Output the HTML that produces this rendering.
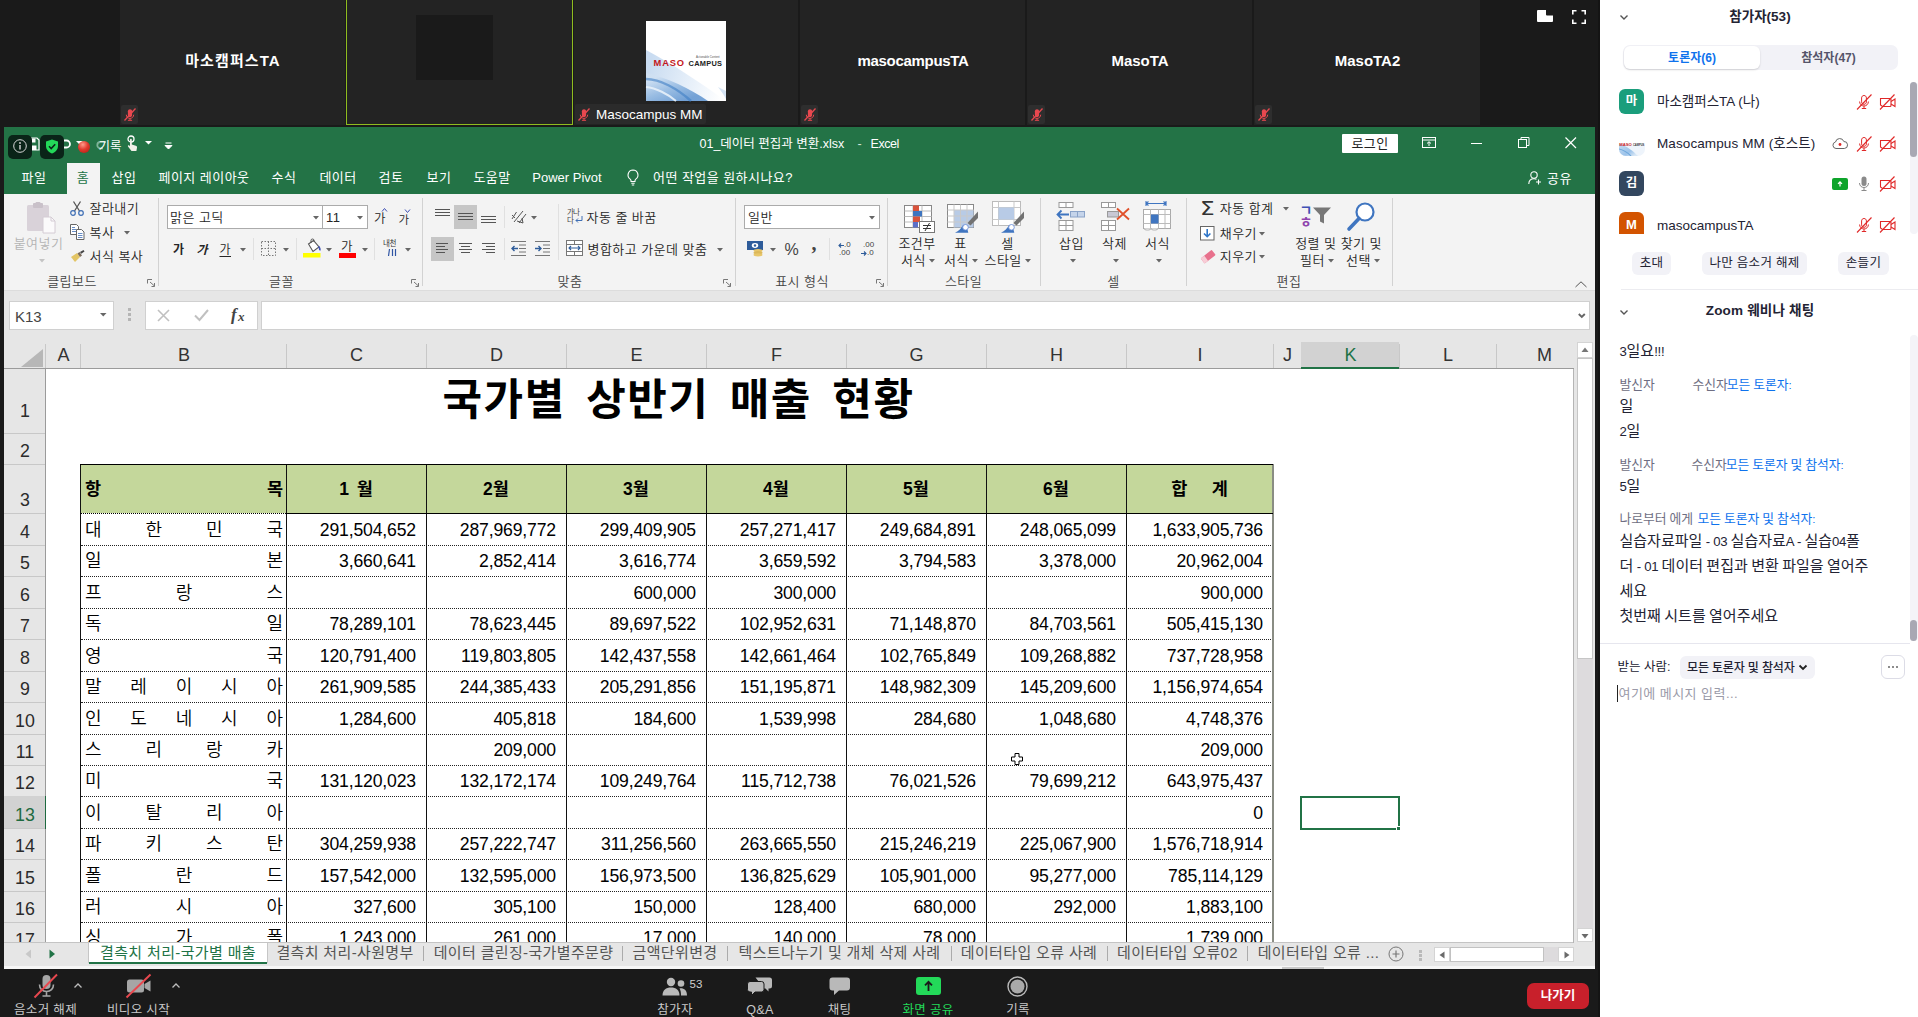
<!DOCTYPE html>
<html lang="ko"><head><meta charset="utf-8"><title>Zoom - Excel</title>
<style>
*{box-sizing:border-box;margin:0;padding:0}
html,body{width:1918px;height:1017px;overflow:hidden;background:#1a1a1a}
body{position:relative;font-family:"Liberation Sans","Noto Sans CJK KR",sans-serif;font-size:12px;color:#262626}
.a{position:absolute}
.t{position:absolute;white-space:nowrap;line-height:1}
.c{text-align:center}
.tile{position:absolute;top:0;height:125px;background:#232323}
.tname{position:absolute;left:0;right:0;top:52px;text-align:center;color:#fff;font-weight:bold;font-size:15px;line-height:18px;white-space:nowrap}
.mutebox{position:absolute;left:1px;top:105px;width:18px;height:19px;background:#2e2e2e;border-radius:2px}
svg{position:absolute;overflow:visible}
#xl{position:absolute;left:4px;top:127px;width:1592px;height:842px;background:#e6e6e6;overflow:hidden}
.rt{position:absolute;white-space:nowrap;line-height:1;font-size:13px;color:#262626}
.rl{position:absolute;white-space:nowrap;line-height:1;font-size:13px;color:#444;text-align:center}
.sep{position:absolute;top:74px;width:1px;height:86px;background:#d4d4d4}
.ch{position:absolute;top:215px;height:27px;line-height:27px;text-align:center;font-size:18px;color:#333;border-right:1px solid #c9c9c9}
.rh{position:absolute;left:0;width:42px;text-align:center;font-size:19px;color:#333;border-bottom:1px solid #c9c9c9;line-height:1}
.rh span{position:absolute;left:0;right:0;bottom:3px}
.cell{position:absolute;font-size:17.5px;line-height:1;white-space:nowrap;color:#000}
.num{text-align:right}
.nm{display:flex;justify-content:space-between}
.hd{font-weight:bold;font-size:17px}
.tab{position:absolute;top:818px;font-size:15.5px;color:#555;white-space:nowrap;line-height:1}
</style></head>
<body>
<div class="a" style="left:120px;top:0px;width:225px;height:125px;background:#232323"></div>
<div class="t" style="left:233.0px;top:52px;font-size:15px;color:#fff;transform:translateX(-50%);font-weight:bold;line-height:18px;letter-spacing:1.1px">마소캠퍼스TA</div>
<div class="a" style="left:121px;top:105px;width:17px;height:19px;background:#2e2e2e;border-radius:2px"></div>
<svg style="left:123.5px;top:107.5px;" width="12" height="13" viewBox="0 0 12 13"><path d="M6 1.2c1.2 0 2.1.9 2.1 2.1v3.6c0 1.2-.9 2.1-2.1 2.1S3.9 8.100 3.900 6.900V3.300c0-1.200.9-2.100 2.100-2.100z" fill="#e8484f"/><path d="M2.300 6.700c0 2 1.600 3.700 3.700 3.700s3.700-1.700 3.700-3.700M6 10.400v1.800M3.900 12.300h4.200" stroke="#e8484f" stroke-width="1" fill="none"/><path d="M0.500 12.500L11.500 0.500" stroke="#e8484f" stroke-width="1.300"/></svg>
<div class="a" style="left:347px;top:0px;width:225px;height:125px;background:#232323"></div>
<div class="a" style="left:574px;top:0px;width:224px;height:125px;background:#232323"></div>
<div class="a" style="left:800px;top:0px;width:225px;height:125px;background:#232323"></div>
<div class="t" style="left:913.0px;top:52px;font-size:15px;color:#fff;transform:translateX(-50%);font-weight:bold;line-height:18px;letter-spacing:-0.3px">masocampusTA</div>
<div class="a" style="left:801px;top:105px;width:17px;height:19px;background:#2e2e2e;border-radius:2px"></div>
<svg style="left:803.5px;top:107.5px;" width="12" height="13" viewBox="0 0 12 13"><path d="M6 1.2c1.2 0 2.1.9 2.1 2.1v3.6c0 1.2-.9 2.1-2.1 2.1S3.9 8.100 3.900 6.900V3.300c0-1.200.9-2.100 2.100-2.100z" fill="#e8484f"/><path d="M2.300 6.700c0 2 1.600 3.700 3.700 3.700s3.700-1.700 3.700-3.700M6 10.400v1.800M3.900 12.300h4.200" stroke="#e8484f" stroke-width="1" fill="none"/><path d="M0.500 12.500L11.500 0.500" stroke="#e8484f" stroke-width="1.300"/></svg>
<div class="a" style="left:1027px;top:0px;width:225px;height:125px;background:#232323"></div>
<div class="t" style="left:1140.0px;top:52px;font-size:15px;color:#fff;transform:translateX(-50%);font-weight:bold;line-height:18px;letter-spacing:0">MasoTA</div>
<div class="a" style="left:1028px;top:105px;width:17px;height:19px;background:#2e2e2e;border-radius:2px"></div>
<svg style="left:1030.5px;top:107.5px;" width="12" height="13" viewBox="0 0 12 13"><path d="M6 1.2c1.2 0 2.1.9 2.1 2.1v3.6c0 1.2-.9 2.1-2.1 2.1S3.9 8.100 3.900 6.900V3.300c0-1.200.9-2.100 2.100-2.100z" fill="#e8484f"/><path d="M2.300 6.700c0 2 1.600 3.700 3.700 3.700s3.700-1.700 3.700-3.700M6 10.400v1.800M3.900 12.300h4.200" stroke="#e8484f" stroke-width="1" fill="none"/><path d="M0.500 12.500L11.500 0.500" stroke="#e8484f" stroke-width="1.300"/></svg>
<div class="a" style="left:1254px;top:0px;width:226px;height:125px;background:#232323"></div>
<div class="t" style="left:1367.5px;top:52px;font-size:15px;color:#fff;transform:translateX(-50%);font-weight:bold;line-height:18px;letter-spacing:0">MasoTA2</div>
<div class="a" style="left:1255px;top:105px;width:17px;height:19px;background:#2e2e2e;border-radius:2px"></div>
<svg style="left:1257.5px;top:107.5px;" width="12" height="13" viewBox="0 0 12 13"><path d="M6 1.2c1.2 0 2.1.9 2.1 2.1v3.6c0 1.2-.9 2.1-2.1 2.1S3.9 8.100 3.900 6.900V3.300c0-1.200.9-2.100 2.100-2.100z" fill="#e8484f"/><path d="M2.300 6.700c0 2 1.600 3.700 3.700 3.700s3.700-1.700 3.700-3.700M6 10.400v1.800M3.900 12.300h4.200" stroke="#e8484f" stroke-width="1" fill="none"/><path d="M0.500 12.500L11.500 0.500" stroke="#e8484f" stroke-width="1.300"/></svg>
<div class="a" style="left:346px;top:-2px;width:227px;height:127px;border:1px solid #8fbc1f"></div>
<div class="a" style="left:416px;top:15px;width:77px;height:65px;background:#1a1a1a"></div>
<svg style="left:646px;top:21px;" width="80" height="80" viewBox="0 0 80 80"><defs><linearGradient id="lg1" x1="0" y1="0.300" x2="0.600" y2="1"><stop offset="0" stop-color="#cfe0f2"/><stop offset="0.500" stop-color="#8fb6e0"/><stop offset="1" stop-color="#5e93cf"/></linearGradient><linearGradient id="lg2" x1="0" y1="0.500" x2="1" y2="0.700"><stop offset="0" stop-color="#c9dcf1"/><stop offset="0.600" stop-color="#e9f1fa"/><stop offset="1" stop-color="#ffffff"/></linearGradient></defs><rect x="0" y="0" width="80" height="80" fill="#fff"/><path d="M0 29 C25 42 55 62 80 80 L0 80Z" fill="url(#lg2)"/><path d="M0 52 C20 56 45 68 62 80 L0 80Z" fill="url(#lg1)" opacity="0.850"/><path d="M0 58 C14 58 32 68 45 80" stroke="#3f7fc4" stroke-width="2.500" fill="none" opacity="0.600"/><path d="M0 66 C10 67 22 73 30 80" stroke="#e8f1fa" stroke-width="2" fill="none" opacity="0.900"/><path d="M72 66 C75 70 78 74 80 78 L80 70Z" fill="#c5d9ef" opacity="0.700"/></svg>
<div class="t" style="left:653.5px;top:58px;font-size:9.3px;color:#c4161c;font-weight:bold;letter-spacing:0.9px;line-height:10px">MASO</div>
<div class="t" style="left:688.5px;top:59.5px;font-size:7.4px;color:#222;font-weight:bold;letter-spacing:0.3px;line-height:8px">CAMPUS</div>
<div class="t" style="left:696px;top:55.5px;font-size:2.8px;color:#555;line-height:3px">Actionable Content</div>
<div class="a" style="left:575px;top:104px;width:131px;height:20px;background:#2b2b2b;border-radius:2px"></div>
<div class="t" style="left:596px;top:106.5px;font-size:13.5px;color:#fff;line-height:15px">Masocampus MM</div>
<svg style="left:578px;top:107.5px;" width="12" height="13" viewBox="0 0 12 13"><path d="M6 1.2c1.2 0 2.1.9 2.1 2.1v3.6c0 1.2-.9 2.1-2.1 2.1S3.9 8.100 3.900 6.900V3.300c0-1.200.9-2.100 2.100-2.100z" fill="#e8484f"/><path d="M2.300 6.700c0 2 1.600 3.700 3.700 3.700s3.700-1.700 3.700-3.700M6 10.400v1.800M3.900 12.300h4.200" stroke="#e8484f" stroke-width="1" fill="none"/><path d="M0.500 12.500L11.500 0.500" stroke="#e8484f" stroke-width="1.300"/></svg>
<svg style="left:1537px;top:10px;" width="16" height="12" viewBox="0 0 16 12"><path d="M1 0h14a1 1 0 0 1 1 1v10a1 1 0 0 1-1 1H1a1 1 0 0 1-1-1V1a1 1 0 0 1 1-1z" fill="#fff"/><path d="M9 0h7v5.500h-6a1 1 0 0 1-1-1z" fill="#1a1a1a"/></svg>
<svg style="left:1572px;top:10px;" width="14" height="14" viewBox="0 0 14 14"><path d="M0.800 4.500V0.800H4.500M9.500 0.800H13.200V4.500M13.200 9.500V13.200H9.500M4.500 13.200H0.800V9.500" stroke="#fff" stroke-width="1.600" fill="none"/></svg>
<div class="a" style="left:4px;top:127px;width:1591px;height:842px;background:#e6e6e6"></div>
<div class="a" style="left:4px;top:127px;width:1591px;height:67px;background:#237346"></div>
<svg style="left:26px;top:137px;" width="14" height="14" viewBox="0 0 14 14"><path d="M1 1h10l2 2v10H1z" fill="none" stroke="#fff" stroke-width="1.200"/><rect x="3.500" y="1.500" width="6" height="4" fill="#fff"/><rect x="3.500" y="8.500" width="7" height="4.500" fill="#fff"/></svg>
<svg style="left:58px;top:137px;" width="14" height="12" viewBox="0 0 14 12"><path d="M3 3.500h5.500a3.500 3.500 0 0 1 0 7H6" stroke="#fff" stroke-width="1.800" fill="none"/></svg>
<svg style="left:76px;top:141px;" width="10" height="6" viewBox="0 0 10 6"><path d="M0 0h7L3.500 3.500z" fill="#fff"/></svg>
<svg style="left:94px;top:139px;" width="16" height="10" viewBox="0 0 16 10"><path d="M12 3H6.500a3.200 3.200 0 0 0 0 6.400H9" stroke="#7fb398" stroke-width="1.800" fill="none"/></svg>
<div class="a" style="left:78px;top:141px;width:12px;height:12px;border-radius:50%;background:radial-gradient(circle at 40% 30%,#ff9a8a 0,#e23a2e 45%,#a81810 100%)"></div>
<div class="t" style="left:98.5px;top:140px;font-size:12.5px;color:#fff;line-height:15px">기록</div>
<svg style="left:126px;top:135px;" width="14" height="18" viewBox="0 0 14 18"><circle cx="5" cy="4" r="3" fill="none" stroke="#fff" stroke-width="1.300"/><path d="M4 4.500c0-1 1.800-1 1.800 0v5l4 1.200c1 .3 1.400 1 1.200 2l-.6 3.300H5.500L2 11.500c-.5-.8.500-1.700 1.300-1l.7.700z" fill="#f2efe9"/></svg>
<svg style="left:145px;top:141px;" width="8" height="5" viewBox="0 0 8 5"><path d="M0 0h7L3.500 3.500z" fill="#fff"/></svg>
<svg style="left:165px;top:143px;" width="8" height="7" viewBox="0 0 8 7"><path d="M0.500 0h6M0 2.500h7L3.500 6z" stroke="#fff" stroke-width="1" fill="#fff"/></svg>
<div class="a" style="left:8px;top:135px;width:24px;height:24px;background:#0a2418;border-radius:5px"></div>
<svg style="left:13px;top:139px;" width="14" height="14" viewBox="0 0 14 14"><circle cx="7" cy="7" r="6.300" fill="none" stroke="#d8d8d8" stroke-width="1"/><circle cx="7" cy="4" r="0.900" fill="#d8d8d8"/><path d="M7 6v4.500" stroke="#d8d8d8" stroke-width="1.400"/></svg>
<div class="a" style="left:40px;top:135px;width:24px;height:24px;background:#0a2418;border-radius:5px"></div>
<svg style="left:45px;top:139px;" width="14" height="15" viewBox="0 0 14 15"><path d="M7 0.500L13 2.500V7c0 3.500-2.500 6-6 7.500C3.500 13 1 10.500 1 7V2.500z" fill="#23d959"/><path d="M4 7.300l2.200 2.200L10.200 5.300" stroke="#0a2418" stroke-width="1.600" fill="none"/></svg>
<div class="t" style="left:699.5px;top:135.5px;font-size:12.5px;color:#fff;line-height:16px">01_데이터 편집과 변환.xlsx</div>
<div class="t" style="left:857.5px;top:135.5px;font-size:12.5px;color:#cfe3d7;line-height:16px">-</div>
<div class="t" style="left:870.5px;top:135.5px;font-size:12.5px;color:#fff;line-height:16px;letter-spacing:-0.45px">Excel</div>
<div class="a" style="left:1342px;top:134px;width:56px;height:19px;background:#fff;border-radius:1px"></div>
<div class="t" style="left:1370px;top:136px;font-size:13px;color:#222;transform:translateX(-50%);line-height:15px;letter-spacing:0.4px">로그인</div>
<svg style="left:1422px;top:137px;" width="14" height="11" viewBox="0 0 14 11"><rect x="0.500" y="0.500" width="13" height="10" fill="none" stroke="#fff" stroke-width="1"/><path d="M0.500 3h13" stroke="#fff" stroke-width="1"/><path d="M7 9V5M5 6.500L7 4.700L9 6.500" stroke="#fff" stroke-width="1" fill="none"/></svg>
<div class="a" style="left:1471px;top:143px;width:11px;height:1px;background:#fff"></div>
<svg style="left:1518px;top:137px;" width="12" height="11" viewBox="0 0 12 11"><rect x="0.500" y="2.500" width="8" height="8" fill="none" stroke="#fff" stroke-width="1"/><path d="M3 2.500V0.500h8v8h-2" fill="none" stroke="#fff" stroke-width="1"/></svg>
<svg style="left:1565px;top:137px;" width="12" height="12" viewBox="0 0 12 12"><path d="M0.500 0.500L11 11M11 0.500L0.500 11" stroke="#fff" stroke-width="1.200"/></svg>
<div class="a" style="left:67px;top:163px;width:33px;height:31px;background:#f3f3f3"></div>
<div class="t" style="left:34px;top:170px;font-size:13px;color:#fff;transform:translateX(-50%);line-height:16px;letter-spacing:0.45px">파일</div>
<div class="t" style="left:83px;top:170px;font-size:13px;color:#217346;transform:translateX(-50%);line-height:16px;letter-spacing:0.45px">홈</div>
<div class="t" style="left:124px;top:170px;font-size:13px;color:#fff;transform:translateX(-50%);line-height:16px;letter-spacing:0.45px">삽입</div>
<div class="t" style="left:204px;top:170px;font-size:13px;color:#fff;transform:translateX(-50%);line-height:16px;letter-spacing:0.45px">페이지 레이아웃</div>
<div class="t" style="left:284px;top:170px;font-size:13px;color:#fff;transform:translateX(-50%);line-height:16px;letter-spacing:0.45px">수식</div>
<div class="t" style="left:338px;top:170px;font-size:13px;color:#fff;transform:translateX(-50%);line-height:16px;letter-spacing:0.45px">데이터</div>
<div class="t" style="left:391px;top:170px;font-size:13px;color:#fff;transform:translateX(-50%);line-height:16px;letter-spacing:0.45px">검토</div>
<div class="t" style="left:439px;top:170px;font-size:13px;color:#fff;transform:translateX(-50%);line-height:16px;letter-spacing:0.45px">보기</div>
<div class="t" style="left:492px;top:170px;font-size:13px;color:#fff;transform:translateX(-50%);line-height:16px;letter-spacing:0.45px">도움말</div>
<div class="t" style="left:567px;top:170px;font-size:13px;color:#fff;transform:translateX(-50%);line-height:16px">Power Pivot</div>
<svg style="left:626px;top:169px;" width="14" height="18" viewBox="0 0 14 18"><path d="M7 1a5 5 0 0 1 2.800 9.100c-.5.400-.8 1-.8 1.700V12.500H5v-.7c0-.7-.3-1.300-.8-1.700A5 5 0 0 1 7 1z" fill="none" stroke="#fff" stroke-width="1.100"/><path d="M5.300 14.200h3.400M5.800 16h2.400" stroke="#fff" stroke-width="1.100"/></svg>
<div class="t" style="left:653px;top:170px;font-size:13px;color:#fff;line-height:16px;letter-spacing:0.45px">어떤 작업을 원하시나요?</div>
<svg style="left:1528px;top:171px;" width="14" height="14" viewBox="0 0 14 14"><circle cx="6" cy="4" r="3.200" fill="none" stroke="#fff" stroke-width="1.100"/><path d="M0.800 13c0-3.500 2.300-5.300 5.200-5.300c1 0 1.800.2 2.500.6" fill="none" stroke="#fff" stroke-width="1.100"/><path d="M10.500 8.500v5M8 11h5" stroke="#fff" stroke-width="1.100"/></svg>
<div class="t" style="left:1547px;top:171px;font-size:13px;color:#fff;line-height:16px;letter-spacing:0.45px">공유</div>
<div class="a" style="left:4px;top:194px;width:1591px;height:96px;background:#f3f3f3"></div>
<div class="a" style="left:4px;top:290px;width:1591px;height:1px;background:#dcdcdc"></div>
<div class="a" style="left:9px;top:301px;width:105px;height:29px;background:#fff;border:1px solid #d0d0d0"></div>
<div class="t" style="left:15px;top:308px;font-size:15px;color:#444;line-height:18px">K13</div>
<svg style="left:100px;top:313px;" width="8" height="5" viewBox="0 0 8 5"><path d="M0 0h6.500L3.250 3.500z" fill="#666"/></svg>
<div class="a" style="left:128px;top:308px;width:3px;height:3px;background:#b5b5b5"></div>
<div class="a" style="left:128px;top:313px;width:3px;height:3px;background:#b5b5b5"></div>
<div class="a" style="left:128px;top:318px;width:3px;height:3px;background:#b5b5b5"></div>
<div class="a" style="left:145px;top:301px;width:113px;height:29px;background:#fff;border:1px solid #d0d0d0"></div>
<svg style="left:157px;top:309px;" width="13" height="13" viewBox="0 0 13 13"><path d="M1 1l11 11M12 1L1 12" stroke="#c0c0c0" stroke-width="1.600"/></svg>
<svg style="left:194px;top:309px;" width="15" height="12" viewBox="0 0 15 12"><path d="M1 6.500l4.500 4.500L14 1" stroke="#c0c0c0" stroke-width="2" fill="none"/></svg>
<div class="t" style="left:231px;top:305px;font-size:17px;color:#444;font-family:'Liberation Serif',serif;font-weight:bold;line-height:20px"><i>f</i></div>
<div class="t" style="left:238px;top:309px;font-size:13px;color:#444;font-family:'Liberation Serif',serif;font-weight:bold;line-height:16px"><i>x</i></div>
<div class="a" style="left:261px;top:301px;width:1329px;height:29px;background:#fff;border:1px solid #d0d0d0"></div>
<svg style="left:1577.5px;top:312.5px;" width="8" height="6" viewBox="0 0 8 6"><path d="M0.800 1l3 3 3-3" stroke="#666" stroke-width="1.900" fill="none"/></svg>
<svg style="left:27px;top:202px;" width="29" height="32" viewBox="0 0 29 32"><rect x="0" y="3" width="22" height="26" rx="1.500" fill="#d9d2d9"/><rect x="6" y="1" width="10" height="5" rx="1" fill="#c9c1c9"/><rect x="8.500" y="0" width="5" height="3" rx="1" fill="#c9c1c9"/><path d="M16 15h8l4 4v12H16z" fill="#fbfafb" stroke="#d4ccd4" stroke-width="1"/><path d="M24 15v4h4" fill="none" stroke="#d4ccd4" stroke-width="1"/></svg>
<div class="t" style="left:38.5px;top:236px;font-size:13px;color:#b3b3b3;transform:translateX(-50%);line-height:16px;letter-spacing:0.45px;font-weight:350;">붙여넣기</div>
<svg style="left:38.5px;top:258.5px;" width="6" height="3.5" viewBox="0 0 6 3.5"><path d="M0 0h6L3 3.500z" fill="#c4c4c4"/></svg>
<svg style="left:70px;top:201px;" width="14" height="15" viewBox="0 0 14 15"><path d="M3.500 0.500L9.500 10M10.500 0.500L4.500 10" stroke="#555" stroke-width="1.300" fill="none"/><circle cx="3" cy="12" r="2.300" fill="none" stroke="#3f6fb5" stroke-width="1.200"/><circle cx="11" cy="12" r="2.300" fill="none" stroke="#3f6fb5" stroke-width="1.200"/></svg>
<div class="t" style="left:89.5px;top:201px;font-size:13px;color:#262626;line-height:16px;letter-spacing:0.45px;font-weight:350;">잘라내기</div>
<svg style="left:70px;top:224px;" width="15" height="16" viewBox="0 0 15 16"><path d="M0.500 0.500h6l2 2v8h-8z" fill="#fff" stroke="#666" stroke-width="1"/><path d="M2 3.500h3M2 5.500h4M2 7.500h4" stroke="#3f6fb5" stroke-width="0.800"/><path d="M6.500 5.500h5l2.500 2.500v7.500h-7.500z" fill="#fff" stroke="#666" stroke-width="1"/><path d="M8 9.500h4.500M8 11.500h4.500M8 13.500h4.500" stroke="#3f6fb5" stroke-width="0.800"/></svg>
<div class="t" style="left:89.5px;top:225px;font-size:13px;color:#262626;line-height:16px;letter-spacing:0.45px;font-weight:350;">복사</div>
<svg style="left:124px;top:230.5px;" width="6" height="3.5" viewBox="0 0 6 3.5"><path d="M0 0h6L3 3.500z" fill="#666"/></svg>
<svg style="left:71px;top:250px;" width="14" height="12" viewBox="0 0 14 12"><path d="M0 7l6-4 3 4-5 5z" fill="#e3c565"/><path d="M6.500 3.500l2-1.500 2.500 3.500-2 1.500z" fill="#7a6a5a"/><path d="M9 2l3.500-2 1 1.500-3.300 2.300z" fill="#444"/></svg>
<div class="t" style="left:89.5px;top:249px;font-size:13px;color:#262626;line-height:16px;letter-spacing:0.45px;font-weight:350;">서식 복사</div>
<div class="t" style="left:72px;top:274px;font-size:13px;color:#444;transform:translateX(-50%);line-height:16px;letter-spacing:0.45px;font-weight:350;">클립보드</div>
<svg style="left:146.5px;top:279px;" width="8" height="8" viewBox="0 0 8 8"><path d="M0.500 4.500V0.500H5" stroke="#777" stroke-width="1" fill="none"/><path d="M3 3l4.500 4M7.500 4V7.500H4.500" stroke="#777" stroke-width="1" fill="none"/></svg>
<div class="a" style="left:158px;top:198px;width:1px;height:88px;background:#d2d2d2"></div>
<div class="a" style="left:167px;top:205px;width:156px;height:24px;background:#fff;border:1px solid #ababab"></div>
<div class="a" style="left:322px;top:205px;width:46px;height:24px;background:#fff;border:1px solid #ababab"></div>
<div class="t" style="left:170px;top:209.5px;font-size:13px;color:#262626;line-height:16px;letter-spacing:0.45px;font-weight:350;">맑은 고딕</div>
<svg style="left:312.5px;top:215.5px;" width="6" height="3.5" viewBox="0 0 6 3.5"><path d="M0 0h6L3 3.500z" fill="#666"/></svg>
<div class="t" style="left:326px;top:209.5px;font-size:13px;color:#262626;line-height:16px;letter-spacing:0.45px;font-weight:350;">11</div>
<svg style="left:357px;top:215.5px;" width="6" height="3.5" viewBox="0 0 6 3.5"><path d="M0 0h6L3 3.500z" fill="#666"/></svg>
<div class="t" style="left:374px;top:211px;font-size:12.5px;color:#262626;line-height:16px;letter-spacing:0.45px;font-weight:350;">가</div>
<svg style="left:382px;top:208px;" width="5" height="4" viewBox="0 0 5 4"><path d="M0 3.500L2.500 0.500L5 3.500" stroke="#3f51b5" stroke-width="1" fill="none"/></svg>
<div class="t" style="left:398.5px;top:212px;font-size:11.5px;color:#262626;line-height:16px;letter-spacing:0.45px;font-weight:350;">가</div>
<svg style="left:405px;top:209px;" width="5" height="4" viewBox="0 0 5 4"><path d="M0 0.500L2.500 3.500L5 0.500" stroke="#3f51b5" stroke-width="1" fill="none"/></svg>
<div class="t" style="left:173px;top:242px;font-size:12px;color:#262626;line-height:16px;letter-spacing:0.45px;font-weight:350;font-weight:bold">가</div>
<div class="t" style="left:196.5px;top:242px;font-size:12px;color:#262626;line-height:16px;letter-spacing:0.45px;font-weight:350;font-weight:bold;font-style:italic">가</div>
<div class="t" style="left:219.5px;top:241.5px;font-size:12px;color:#262626;line-height:16px;letter-spacing:0.45px;font-weight:350;text-decoration:underline;text-underline-offset:2px">가</div>
<svg style="left:239.5px;top:247.5px;" width="6" height="3.5" viewBox="0 0 6 3.5"><path d="M0 0h6L3 3.500z" fill="#666"/></svg>
<div class="a" style="left:253px;top:238px;width:1px;height:22px;background:#e0e0e0"></div>
<svg style="left:261px;top:241px;" width="15" height="15" viewBox="0 0 15 15"><path d="M0.500 0.500h14v14h-14zM7.500 0.500v14M0.500 7.500h14" stroke="#777" stroke-width="1" stroke-dasharray="1.500 1.500" fill="none"/></svg>
<svg style="left:282.5px;top:247.5px;" width="6" height="3.5" viewBox="0 0 6 3.5"><path d="M0 0h6L3 3.500z" fill="#666"/></svg>
<div class="a" style="left:296px;top:238px;width:1px;height:22px;background:#e0e0e0"></div>
<svg style="left:303px;top:238px;" width="18" height="20" viewBox="0 0 18 20"><path d="M5.500 6l5-3.500 5.500 6.500-6 4.500z" fill="#fff" stroke="#555" stroke-width="1.100"/><path d="M8 5V2.500a1.500 1.500 0 0 1 3 0V4" stroke="#555" stroke-width="1" fill="none"/><path d="M15.500 8.500c1.200 1.500 1.800 2.700 1.200 3.800" stroke="#3f51b5" stroke-width="1.600" fill="none"/><rect x="0" y="15" width="17.500" height="4.500" fill="#ffff00"/></svg>
<svg style="left:325.5px;top:247.5px;" width="6" height="3.5" viewBox="0 0 6 3.5"><path d="M0 0h6L3 3.500z" fill="#666"/></svg>
<div class="t" style="left:341px;top:239px;font-size:12.5px;color:#262626;line-height:16px;letter-spacing:0.45px;font-weight:350;">가</div>
<div class="a" style="left:339px;top:253px;width:17px;height:4.5px;background:#ff0000"></div>
<svg style="left:361.5px;top:247.5px;" width="6" height="3.5" viewBox="0 0 6 3.5"><path d="M0 0h6L3 3.500z" fill="#666"/></svg>
<div class="a" style="left:374px;top:238px;width:1px;height:22px;background:#e0e0e0"></div>
<div class="t" style="left:383px;top:239px;font-size:7.5px;color:#333;line-height:9px;letter-spacing:-0.5px">내천</div>
<svg style="left:388px;top:249px;" width="8" height="7" viewBox="0 0 8 7"><path d="M1.500 0L0.500 7M4.500 0v7M7.500 0v7" stroke="#2f55a4" stroke-width="1.200"/></svg>
<svg style="left:404.5px;top:247.5px;" width="6" height="3.5" viewBox="0 0 6 3.5"><path d="M0 0h6L3 3.500z" fill="#666"/></svg>
<div class="t" style="left:281.5px;top:274px;font-size:13px;color:#444;transform:translateX(-50%);line-height:16px;letter-spacing:0.45px;font-weight:350;">글꼴</div>
<svg style="left:410.5px;top:279px;" width="8" height="8" viewBox="0 0 8 8"><path d="M0.500 4.500V0.500H5" stroke="#777" stroke-width="1" fill="none"/><path d="M3 3l4.500 4M7.500 4V7.500H4.500" stroke="#777" stroke-width="1" fill="none"/></svg>
<div class="a" style="left:422px;top:198px;width:1px;height:88px;background:#d2d2d2"></div>
<div class="a" style="left:435px;top:209px;width:15px;height:1px;background:#555"></div>
<div class="a" style="left:435px;top:212px;width:15px;height:1px;background:#555"></div>
<div class="a" style="left:435px;top:215px;width:15px;height:1px;background:#555"></div>
<div class="a" style="left:454px;top:205px;width:23px;height:24px;background:#c6c6c6"></div>
<div class="a" style="left:458px;top:213px;width:15px;height:1px;background:#555"></div>
<div class="a" style="left:458px;top:216px;width:15px;height:1px;background:#555"></div>
<div class="a" style="left:458px;top:219px;width:15px;height:1px;background:#555"></div>
<div class="a" style="left:481px;top:216px;width:15px;height:1px;background:#555"></div>
<div class="a" style="left:481px;top:219px;width:15px;height:1px;background:#555"></div>
<div class="a" style="left:481px;top:222px;width:15px;height:1px;background:#555"></div>
<div class="a" style="left:504px;top:206px;width:1px;height:22px;background:#e0e0e0"></div>
<svg style="left:511px;top:207px;" width="17" height="18" viewBox="0 0 17 18"><path d="M1 12l4.500-7M3 15l9-11M8 16l7-9" stroke="#555" stroke-width="1" fill="none"/><path d="M6 14l6 2-1-5" stroke="#555" stroke-width="1" fill="none"/><path d="M1 8l3 3" stroke="#555" stroke-width="1"/></svg>
<svg style="left:531px;top:215.5px;" width="6" height="3.5" viewBox="0 0 6 3.5"><path d="M0 0h6L3 3.500z" fill="#666"/></svg>
<div class="a" style="left:558px;top:204px;width:1px;height:56px;background:#e0e0e0"></div>
<div class="t" style="left:567px;top:209px;font-size:7.5px;color:#444;line-height:8px;letter-spacing:-1px">가나</div>
<div class="t" style="left:567px;top:217px;font-size:7.5px;color:#444;line-height:8px">다</div>
<svg style="left:574px;top:216px;" width="9" height="8" viewBox="0 0 9 8"><path d="M8 0v4.500H2M4 2.500L2 4.500l2 2" stroke="#3f6fb5" stroke-width="1" fill="none"/></svg>
<div class="t" style="left:586.5px;top:209.5px;font-size:13px;color:#262626;line-height:16px;letter-spacing:0.45px;font-weight:350;">자동 줄 바꿈</div>
<div class="a" style="left:431px;top:237px;width:23px;height:24px;background:#c6c6c6"></div>
<div class="a" style="left:436px;top:243px;width:12px;height:1px;background:#555"></div>
<div class="a" style="left:436px;top:246px;width:9px;height:1px;background:#555"></div>
<div class="a" style="left:436px;top:249px;width:12px;height:1px;background:#555"></div>
<div class="a" style="left:436px;top:252px;width:9px;height:1px;background:#555"></div>
<div class="a" style="left:459px;top:243px;width:13px;height:1px;background:#555"></div>
<div class="a" style="left:461px;top:246px;width:9px;height:1px;background:#555"></div>
<div class="a" style="left:459px;top:249px;width:13px;height:1px;background:#555"></div>
<div class="a" style="left:461px;top:252px;width:9px;height:1px;background:#555"></div>
<div class="a" style="left:482px;top:243px;width:13px;height:1px;background:#555"></div>
<div class="a" style="left:486px;top:246px;width:9px;height:1px;background:#555"></div>
<div class="a" style="left:482px;top:249px;width:13px;height:1px;background:#555"></div>
<div class="a" style="left:486px;top:252px;width:9px;height:1px;background:#555"></div>
<div class="a" style="left:504px;top:238px;width:1px;height:22px;background:#e0e0e0"></div>
<svg style="left:511px;top:241px;" width="16" height="15" viewBox="0 0 16 15"><path d="M0 0.500h15M8 4h7M8 7.500h7M8 11h7M0 14.500h15" stroke="#777" stroke-width="1"/><path d="M7 7.500H1M3.500 5L1 7.500 3.500 10" stroke="#2e5c9a" stroke-width="1.400" fill="none"/></svg>
<svg style="left:535px;top:241px;" width="16" height="15" viewBox="0 0 16 15"><path d="M0 0.500h15M8 4h7M8 7.500h7M8 11h7M0 14.500h15" stroke="#777" stroke-width="1"/><path d="M0 7.500h6M3.500 5L6 7.500 3.500 10" stroke="#2e5c9a" stroke-width="1.400" fill="none"/></svg>
<svg style="left:566px;top:240px;" width="17" height="16" viewBox="0 0 17 16"><rect x="0.500" y="0.500" width="16" height="15" fill="#fff" stroke="#777"/><path d="M0.500 4.500h16M0.500 11.500h16M8.500 0.500v4M8.500 11.500v4" stroke="#777" stroke-width="1"/><path d="M3 8h11M5 6L3 8l2 2M12 6l2 2-2 2" stroke="#2e5c9a" stroke-width="1.100" fill="none"/></svg>
<div class="t" style="left:587.5px;top:241.5px;font-size:13px;color:#262626;line-height:16px;letter-spacing:0.45px;font-weight:350;">병합하고 가운데 맞춤</div>
<svg style="left:716.5px;top:247.5px;" width="6" height="3.5" viewBox="0 0 6 3.5"><path d="M0 0h6L3 3.500z" fill="#666"/></svg>
<div class="t" style="left:570px;top:274px;font-size:13px;color:#444;transform:translateX(-50%);line-height:16px;letter-spacing:0.45px;font-weight:350;">맞춤</div>
<svg style="left:723px;top:279px;" width="8" height="8" viewBox="0 0 8 8"><path d="M0.500 4.500V0.500H5" stroke="#777" stroke-width="1" fill="none"/><path d="M3 3l4.500 4M7.500 4V7.500H4.500" stroke="#777" stroke-width="1" fill="none"/></svg>
<div class="a" style="left:735px;top:198px;width:1px;height:88px;background:#d2d2d2"></div>
<div class="a" style="left:744px;top:205px;width:136px;height:24px;background:#fff;border:1px solid #ababab"></div>
<div class="t" style="left:748px;top:209.5px;font-size:13px;color:#262626;line-height:16px;letter-spacing:0.45px;font-weight:350;">일반</div>
<svg style="left:869px;top:215.5px;" width="6" height="3.5" viewBox="0 0 6 3.5"><path d="M0 0h6L3 3.500z" fill="#666"/></svg>
<svg style="left:747px;top:241px;" width="18" height="16" viewBox="0 0 18 16"><rect x="0" y="0" width="16" height="9" fill="#2e5c9a"/><ellipse cx="8" cy="4.500" rx="3.200" ry="2.400" fill="#fff"/><circle cx="8" cy="4.500" r="1.200" fill="#2e5c9a"/><ellipse cx="11" cy="9.500" rx="4.500" ry="1.600" fill="#e8c66a"/><ellipse cx="11" cy="11.700" rx="4.500" ry="1.600" fill="#dcb85a"/><ellipse cx="11" cy="13.800" rx="4.500" ry="1.600" fill="#e8c66a"/></svg>
<svg style="left:770px;top:247.5px;" width="6" height="3.5" viewBox="0 0 6 3.5"><path d="M0 0h6L3 3.500z" fill="#666"/></svg>
<div class="t" style="left:784.5px;top:240px;font-size:16px;color:#444;line-height:19px;letter-spacing:0">%</div>
<div class="t" style="left:811.5px;top:232.5px;font-size:20px;color:#444;line-height:20px;font-weight:bold;font-family:'Liberation Serif',serif">,</div>
<div class="a" style="left:829px;top:238px;width:1px;height:22px;background:#e0e0e0"></div>
<div class="t" style="left:844px;top:241px;font-size:8px;color:#444;line-height:8px">.0</div>
<div class="t" style="left:839px;top:249px;font-size:8px;color:#444;line-height:8px">.00</div>
<svg style="left:838px;top:243px;" width="6" height="5" viewBox="0 0 6 5"><path d="M6 2.500H1M3 0.500L1 2.500l2 2" stroke="#2e5c9a" stroke-width="1.100" fill="none"/></svg>
<div class="t" style="left:863px;top:241px;font-size:8px;color:#444;line-height:8px">.00</div>
<div class="t" style="left:867px;top:249px;font-size:8px;color:#444;line-height:8px">.0</div>
<svg style="left:861px;top:251px;" width="6" height="5" viewBox="0 0 6 5"><path d="M0 2.500h5M3 0.500l2 2-2 2" stroke="#2e5c9a" stroke-width="1.100" fill="none"/></svg>
<div class="t" style="left:802px;top:274px;font-size:13px;color:#444;transform:translateX(-50%);line-height:16px;letter-spacing:0.45px;font-weight:350;">표시 형식</div>
<svg style="left:876px;top:279px;" width="8" height="8" viewBox="0 0 8 8"><path d="M0.500 4.500V0.500H5" stroke="#777" stroke-width="1" fill="none"/><path d="M3 3l4.500 4M7.500 4V7.500H4.500" stroke="#777" stroke-width="1" fill="none"/></svg>
<div class="a" style="left:887px;top:198px;width:1px;height:88px;background:#d2d2d2"></div>
<svg style="left:904px;top:205px;" width="32" height="28" viewBox="0 0 32 28"><rect x="0.500" y="0.500" width="27" height="22" fill="#fff" stroke="#888"/><path d="M0.500 6h27M0.500 11.500h27M0.500 17h27M9 0.500v22M18 0.500v22" stroke="#bbb" stroke-width="1"/><rect x="9" y="0.500" width="6" height="5.500" fill="#d9533c"/><rect x="9" y="6" width="9" height="5.500" fill="#3f75c0"/><rect x="9" y="11.500" width="7" height="5.500" fill="#d9533c"/><rect x="9" y="17" width="5" height="5.500" fill="#5b6fc8"/><rect x="15.500" y="16.500" width="15" height="11" fill="#fff" stroke="#777"/><path d="M19 20.500h8M19 23.500h8M25.500 18l-4.500 8" stroke="#333" stroke-width="1"/></svg>
<div class="t" style="left:917px;top:236px;font-size:13px;color:#262626;transform:translateX(-50%);line-height:16px;letter-spacing:0.45px;font-weight:350;">조건부</div>
<div class="t" style="left:901px;top:252.5px;font-size:13px;color:#262626;line-height:16px;letter-spacing:0.45px;font-weight:350;">서식</div>
<svg style="left:928.5px;top:258.5px;" width="6" height="3.5" viewBox="0 0 6 3.5"><path d="M0 0h6L3 3.500z" fill="#666"/></svg>
<svg style="left:947px;top:204px;" width="32" height="29" viewBox="0 0 32 29"><rect x="0.500" y="0.500" width="26" height="23" fill="#fff" stroke="#888"/><rect x="7" y="6" width="19.500" height="17.500" fill="#b8cbe6"/><path d="M0.500 6h26M0.500 12h26M0.500 18h26M7 0.500v23M13.500 0.500v23M20 0.500v23" stroke="#c9c9c9" stroke-width="1"/></svg>
<div class="t" style="left:960.5px;top:236px;font-size:13px;color:#262626;transform:translateX(-50%);line-height:16px;letter-spacing:0.45px;font-weight:350;">표</div>
<div class="t" style="left:944px;top:252.5px;font-size:13px;color:#262626;line-height:16px;letter-spacing:0.45px;font-weight:350;">서식</div>
<svg style="left:971.5px;top:258.5px;" width="6" height="3.5" viewBox="0 0 6 3.5"><path d="M0 0h6L3 3.500z" fill="#666"/></svg>
<svg style="left:992px;top:201px;" width="33" height="32" viewBox="0 0 33 32"><rect x="0.500" y="0.500" width="28" height="24" fill="#fff" stroke="#bbb"/><path d="M0.500 6.500h28M0.500 18.500h28M6.500 0.500v24M22 0.500v24" stroke="#c9c9c9" stroke-width="1"/><rect x="6.500" y="6.500" width="15.500" height="12" fill="#b8cbe6"/></svg>
<div class="t" style="left:1007.5px;top:236px;font-size:13px;color:#262626;transform:translateX(-50%);line-height:16px;letter-spacing:0.45px;font-weight:350;">셀</div>
<div class="t" style="left:984.5px;top:252.5px;font-size:13px;color:#262626;line-height:16px;letter-spacing:0.45px;font-weight:350;">스타일</div>
<svg style="left:1025px;top:258.5px;" width="6" height="3.5" viewBox="0 0 6 3.5"><path d="M0 0h6L3 3.500z" fill="#666"/></svg>
<svg style="left:954px;top:210.5px;" width="25" height="23" viewBox="0 0 25 23"><path d="M24 0.500V7L16.500 14.500l-3-2.500z" fill="#727272"/><path d="M1 21.700h13.300c-.5-3.500-2.500-6-5-8-2 3.500-4.500 6.500-8.300 8z" fill="#3f75c0"/><circle cx="11.500" cy="16.300" r="2.800" fill="#fff" stroke="#6c8fd8" stroke-width="0.900"/></svg>
<svg style="left:999.7px;top:211px;" width="25" height="23" viewBox="0 0 25 23"><path d="M24 0.500V7L16.500 14.500l-3-2.500z" fill="#727272"/><path d="M1 21.700h13.300c-.5-3.500-2.500-6-5-8-2 3.500-4.500 6.500-8.300 8z" fill="#3f75c0"/><circle cx="11.500" cy="16.300" r="2.800" fill="#fff" stroke="#6c8fd8" stroke-width="0.900"/></svg>
<div class="t" style="left:963.5px;top:274px;font-size:13px;color:#444;transform:translateX(-50%);line-height:16px;letter-spacing:0.45px;font-weight:350;">스타일</div>
<div class="a" style="left:1040px;top:198px;width:1px;height:88px;background:#d2d2d2"></div>
<svg style="left:1056px;top:202px;" width="30" height="29" viewBox="0 0 30 29"><rect x="3" y="0.500" width="14" height="5" fill="#fff" stroke="#999"/><path d="M10 0.500v5" stroke="#999"/><rect x="14.500" y="9.500" width="14" height="5.500" fill="#c5d4ea" stroke="#8aa3c8"/><path d="M21.500 9.500v5.500" stroke="#8aa3c8"/><path d="M13 12.500H1.500M5.500 8.500L1.500 12.500l4 4" stroke="#3f75c0" stroke-width="1.800" fill="none"/><rect x="3" y="18.500" width="14" height="10" fill="#fff" stroke="#999"/><path d="M10 18.500v10M3 23.500h14" stroke="#999"/></svg>
<div class="t" style="left:1071.5px;top:236px;font-size:13px;color:#262626;transform:translateX(-50%);line-height:16px;letter-spacing:0.45px;font-weight:350;">삽입</div>
<svg style="left:1069.8px;top:258.5px;" width="6" height="3.5" viewBox="0 0 6 3.5"><path d="M0 0h6L3 3.500z" fill="#666"/></svg>
<svg style="left:1101px;top:202px;" width="30" height="29" viewBox="0 0 30 29"><rect x="0.500" y="0.500" width="14" height="5" fill="#fff" stroke="#999"/><path d="M7.500 0.500v5" stroke="#999"/><rect x="6.500" y="9.500" width="11" height="5.500" fill="#c8c8d4" stroke="#999"/><path d="M16 6.500l12 11M28 6.500l-12 11" stroke="#e0502a" stroke-width="1.800"/><rect x="0.500" y="18.500" width="14" height="10" fill="#fff" stroke="#999"/><path d="M7.500 18.500v10M0.500 23.500h14" stroke="#999"/></svg>
<div class="t" style="left:1114.5px;top:236px;font-size:13px;color:#262626;transform:translateX(-50%);line-height:16px;letter-spacing:0.45px;font-weight:350;">삭제</div>
<svg style="left:1112.6px;top:258.5px;" width="6" height="3.5" viewBox="0 0 6 3.5"><path d="M0 0h6L3 3.500z" fill="#666"/></svg>
<svg style="left:1143px;top:201px;" width="30" height="31" viewBox="0 0 30 31"><path d="M3 2.500h20M3 0v5M23 0v5M5.500 0.500L3 2.500l2.500 2M20.500 0.500L23 2.500l-2.500 2" stroke="#3f75c0" stroke-width="1.100" fill="none"/><rect x="0.500" y="8.500" width="27" height="19" fill="#fff" stroke="#aaa"/><path d="M0.500 13.500h27M0.500 22.500h27M7.500 8.500v19M15.500 8.500v19M22 8.500v19" stroke="#bbb"/><rect x="8" y="13.500" width="7.500" height="9" fill="#3f75c0"/><path d="M1 27.500c0 2 7 2 7 0M8 27.500c0 2 7 2 7 0" stroke="#aaa" fill="#fff"/></svg>
<div class="t" style="left:1157.5px;top:236px;font-size:13px;color:#262626;transform:translateX(-50%);line-height:16px;letter-spacing:0.45px;font-weight:350;">서식</div>
<svg style="left:1155.8px;top:258.5px;" width="6" height="3.5" viewBox="0 0 6 3.5"><path d="M0 0h6L3 3.500z" fill="#666"/></svg>
<div class="t" style="left:1113.5px;top:274px;font-size:13px;color:#444;transform:translateX(-50%);line-height:16px;letter-spacing:0.45px;font-weight:350;">셀</div>
<div class="a" style="left:1186px;top:198px;width:1px;height:88px;background:#d2d2d2"></div>
<div class="t" style="left:1200px;top:198px;font-size:19px;color:#333;line-height:20px;font-family:'DejaVu Sans',sans-serif;transform:scaleX(1.22);transform-origin:left">Σ</div>
<div class="t" style="left:1219.8px;top:201px;font-size:13px;color:#262626;line-height:16px;letter-spacing:0.45px;font-weight:350;">자동 합계</div>
<svg style="left:1282.5px;top:207.0px;" width="6" height="3.5" viewBox="0 0 6 3.5"><path d="M0 0h6L3 3.500z" fill="#666"/></svg>
<svg style="left:1199.5px;top:225.5px;" width="15" height="15" viewBox="0 0 15 15"><rect x="0.500" y="0.500" width="13.500" height="13.500" fill="#fff" stroke="#666"/><path d="M7.200 3v7.500M4 7.500l3.200 3.200 3.200-3.200" stroke="#2e75c8" stroke-width="1.600" fill="none"/></svg>
<div class="t" style="left:1219.8px;top:225.5px;font-size:13px;color:#262626;line-height:16px;letter-spacing:0.45px;font-weight:350;">채우기</div>
<svg style="left:1259.4px;top:231.5px;" width="6" height="3.5" viewBox="0 0 6 3.5"><path d="M0 0h6L3 3.500z" fill="#666"/></svg>
<svg style="left:1200.5px;top:250px;" width="14" height="13" viewBox="0 0 14 13"><g transform="rotate(-38 7 6.500)"><rect x="0" y="3.500" width="14" height="6.500" rx="0.800" fill="#e8718d"/><rect x="0" y="3.500" width="4.500" height="6.500" rx="0.800" fill="#f7cdd6"/></g></svg>
<div class="t" style="left:1219.8px;top:249px;font-size:13px;color:#262626;line-height:16px;letter-spacing:0.45px;font-weight:350;">지우기</div>
<svg style="left:1259.4px;top:255.0px;" width="6" height="3.5" viewBox="0 0 6 3.5"><path d="M0 0h6L3 3.500z" fill="#666"/></svg>
<div class="t" style="left:1299.5px;top:203px;font-size:14px;color:#3f51b5;line-height:14px;font-weight:bold">ㄱ</div>
<div class="t" style="left:1299.5px;top:215px;font-size:14px;color:#8e44ad;line-height:14px;font-weight:bold">ㅎ</div>
<svg style="left:1313px;top:207px;" width="19" height="18" viewBox="0 0 19 18"><path d="M0 0.500h18l-7 7.500v8.500l-4-2V8z" fill="#777"/></svg>
<div class="t" style="left:1315.8px;top:236px;font-size:13px;color:#262626;transform:translateX(-50%);line-height:16px;letter-spacing:0.45px;font-weight:350;">정렬 및</div>
<div class="t" style="left:1300px;top:252.5px;font-size:13px;color:#262626;line-height:16px;letter-spacing:0.45px;font-weight:350;">필터</div>
<svg style="left:1327.5px;top:258.5px;" width="6" height="3.5" viewBox="0 0 6 3.5"><path d="M0 0h6L3 3.500z" fill="#666"/></svg>
<svg style="left:1347px;top:202px;" width="29" height="30" viewBox="0 0 29 30"><circle cx="18" cy="10" r="8.500" fill="#fff" stroke="#3f75c0" stroke-width="2.200"/><path d="M12 16.500L2 27" stroke="#3f75c0" stroke-width="3.600" stroke-linecap="round"/></svg>
<div class="t" style="left:1361.3px;top:236px;font-size:13px;color:#262626;transform:translateX(-50%);line-height:16px;letter-spacing:0.45px;font-weight:350;">찾기 및</div>
<div class="t" style="left:1346px;top:252.5px;font-size:13px;color:#262626;line-height:16px;letter-spacing:0.45px;font-weight:350;">선택</div>
<svg style="left:1373.5px;top:258.5px;" width="6" height="3.5" viewBox="0 0 6 3.5"><path d="M0 0h6L3 3.500z" fill="#666"/></svg>
<div class="t" style="left:1289px;top:274px;font-size:13px;color:#444;transform:translateX(-50%);line-height:16px;letter-spacing:0.45px;font-weight:350;">편집</div>
<div class="a" style="left:1392px;top:198px;width:1px;height:88px;background:#d2d2d2"></div>
<svg style="left:1575px;top:280.5px;" width="12" height="7" viewBox="0 0 12 7"><path d="M0.500 6l5.500-5.200 5.500 5.200" stroke="#555" stroke-width="1" fill="none"/></svg>
<div class="a" style="left:46px;top:369px;width:1528px;height:573px;background:#fff"></div>
<div class="a" style="left:4px;top:341px;width:1570px;height:28px;background:#e6e6e6"></div>
<div class="a" style="left:4px;top:368px;width:1570px;height:1px;background:#9b9b9b"></div>
<svg style="left:21px;top:349px;" width="22" height="18" viewBox="0 0 22 18"><path d="M22 0V18H0z" fill="#b7b7b7"/></svg>
<div class="t" style="left:63.5px;top:344px;font-size:18px;color:#333;transform:translateX(-50%);line-height:22px">A</div>
<div class="a" style="left:80px;top:344px;width:1px;height:24px;background:#c8c8c8"></div>
<div class="t" style="left:184.0px;top:344px;font-size:18px;color:#333;transform:translateX(-50%);line-height:22px">B</div>
<div class="a" style="left:286px;top:344px;width:1px;height:24px;background:#c8c8c8"></div>
<div class="t" style="left:356.5px;top:344px;font-size:18px;color:#333;transform:translateX(-50%);line-height:22px">C</div>
<div class="a" style="left:426px;top:344px;width:1px;height:24px;background:#c8c8c8"></div>
<div class="t" style="left:496.5px;top:344px;font-size:18px;color:#333;transform:translateX(-50%);line-height:22px">D</div>
<div class="a" style="left:566px;top:344px;width:1px;height:24px;background:#c8c8c8"></div>
<div class="t" style="left:636.5px;top:344px;font-size:18px;color:#333;transform:translateX(-50%);line-height:22px">E</div>
<div class="a" style="left:706px;top:344px;width:1px;height:24px;background:#c8c8c8"></div>
<div class="t" style="left:776.5px;top:344px;font-size:18px;color:#333;transform:translateX(-50%);line-height:22px">F</div>
<div class="a" style="left:846px;top:344px;width:1px;height:24px;background:#c8c8c8"></div>
<div class="t" style="left:916.5px;top:344px;font-size:18px;color:#333;transform:translateX(-50%);line-height:22px">G</div>
<div class="a" style="left:986px;top:344px;width:1px;height:24px;background:#c8c8c8"></div>
<div class="t" style="left:1056.5px;top:344px;font-size:18px;color:#333;transform:translateX(-50%);line-height:22px">H</div>
<div class="a" style="left:1126px;top:344px;width:1px;height:24px;background:#c8c8c8"></div>
<div class="t" style="left:1200.0px;top:344px;font-size:18px;color:#333;transform:translateX(-50%);line-height:22px">I</div>
<div class="a" style="left:1273px;top:344px;width:1px;height:24px;background:#c8c8c8"></div>
<div class="t" style="left:1287.5px;top:344px;font-size:18px;color:#333;transform:translateX(-50%);line-height:22px">J</div>
<div class="a" style="left:1301px;top:344px;width:1px;height:24px;background:#c8c8c8"></div>
<div class="a" style="left:1301px;top:342px;width:98px;height:26px;background:#d2d2d2"></div>
<div class="a" style="left:1301px;top:367px;width:98px;height:2px;background:#217346"></div>
<div class="t" style="left:1350.5px;top:344px;font-size:18px;color:#217346;transform:translateX(-50%);line-height:22px">K</div>
<div class="a" style="left:1399px;top:344px;width:1px;height:24px;background:#c8c8c8"></div>
<div class="t" style="left:1448.0px;top:344px;font-size:18px;color:#333;transform:translateX(-50%);line-height:22px">L</div>
<div class="a" style="left:1496px;top:344px;width:1px;height:24px;background:#c8c8c8"></div>
<div class="t" style="left:1544.5px;top:344px;font-size:18px;color:#333;transform:translateX(-50%);line-height:22px">M</div>
<div class="a" style="left:45px;top:344px;width:1px;height:24px;background:#c8c8c8"></div>
<div class="a" style="left:4px;top:369px;width:42px;height:573px;background:#e6e6e6"></div>
<div class="a" style="left:45px;top:369px;width:1px;height:573px;background:#9b9b9b"></div>
<div class="a" style="left:4px;top:433px;width:41px;height:1px;background:#c8c8c8"></div>
<div class="t" style="left:25px;top:399.5px;font-size:17.8px;color:#2b2b2b;transform:translateX(-50%);line-height:22px">1</div>
<div class="a" style="left:4px;top:464px;width:41px;height:1px;background:#c8c8c8"></div>
<div class="t" style="left:25px;top:439.5px;font-size:17.8px;color:#2b2b2b;transform:translateX(-50%);line-height:22px">2</div>
<div class="a" style="left:4px;top:513px;width:41px;height:1px;background:#c8c8c8"></div>
<div class="t" style="left:25px;top:488.5px;font-size:17.8px;color:#2b2b2b;transform:translateX(-50%);line-height:22px">3</div>
<div class="a" style="left:4px;top:545px;width:41px;height:1px;background:#c8c8c8"></div>
<div class="t" style="left:25px;top:520.5px;font-size:17.8px;color:#2b2b2b;transform:translateX(-50%);line-height:22px">4</div>
<div class="a" style="left:4px;top:576px;width:41px;height:1px;background:#c8c8c8"></div>
<div class="t" style="left:25px;top:551.5px;font-size:17.8px;color:#2b2b2b;transform:translateX(-50%);line-height:22px">5</div>
<div class="a" style="left:4px;top:608px;width:41px;height:1px;background:#c8c8c8"></div>
<div class="t" style="left:25px;top:583.5px;font-size:17.8px;color:#2b2b2b;transform:translateX(-50%);line-height:22px">6</div>
<div class="a" style="left:4px;top:639px;width:41px;height:1px;background:#c8c8c8"></div>
<div class="t" style="left:25px;top:614.5px;font-size:17.8px;color:#2b2b2b;transform:translateX(-50%);line-height:22px">7</div>
<div class="a" style="left:4px;top:671px;width:41px;height:1px;background:#c8c8c8"></div>
<div class="t" style="left:25px;top:646.5px;font-size:17.8px;color:#2b2b2b;transform:translateX(-50%);line-height:22px">8</div>
<div class="a" style="left:4px;top:702px;width:41px;height:1px;background:#c8c8c8"></div>
<div class="t" style="left:25px;top:677.5px;font-size:17.8px;color:#2b2b2b;transform:translateX(-50%);line-height:22px">9</div>
<div class="a" style="left:4px;top:734px;width:41px;height:1px;background:#c8c8c8"></div>
<div class="t" style="left:25px;top:709.5px;font-size:17.8px;color:#2b2b2b;transform:translateX(-50%);line-height:22px">10</div>
<div class="a" style="left:4px;top:765px;width:41px;height:1px;background:#c8c8c8"></div>
<div class="t" style="left:25px;top:740.5px;font-size:17.8px;color:#2b2b2b;transform:translateX(-50%);line-height:22px">11</div>
<div class="a" style="left:4px;top:796px;width:41px;height:1px;background:#c8c8c8"></div>
<div class="t" style="left:25px;top:771.5px;font-size:17.8px;color:#2b2b2b;transform:translateX(-50%);line-height:22px">12</div>
<div class="a" style="left:4px;top:796px;width:41px;height:32px;background:#d2d2d2"></div>
<div class="a" style="left:45px;top:796px;width:1px;height:33px;background:#1e6a40"></div>
<div class="a" style="left:4px;top:828px;width:41px;height:1px;background:#c8c8c8"></div>
<div class="t" style="left:25px;top:803.5px;font-size:17.8px;color:#1e6a40;transform:translateX(-50%);line-height:22px">13</div>
<div class="a" style="left:4px;top:859px;width:41px;height:1px;background:#c8c8c8"></div>
<div class="t" style="left:25px;top:834.5px;font-size:17.8px;color:#2b2b2b;transform:translateX(-50%);line-height:22px">14</div>
<div class="a" style="left:4px;top:891px;width:41px;height:1px;background:#c8c8c8"></div>
<div class="t" style="left:25px;top:866.5px;font-size:17.8px;color:#2b2b2b;transform:translateX(-50%);line-height:22px">15</div>
<div class="a" style="left:4px;top:922px;width:41px;height:1px;background:#c8c8c8"></div>
<div class="t" style="left:25px;top:897.5px;font-size:17.8px;color:#2b2b2b;transform:translateX(-50%);line-height:22px">16</div>
<div class="t" style="left:25px;top:928.5px;font-size:17.8px;color:#2b2b2b;transform:translateX(-50%);line-height:22px">17</div>
<div class="t" style="left:678.5px;top:374px;font-size:43px;color:#000;transform:translateX(-50%);font-weight:bold;line-height:52px;letter-spacing:1.5px;word-spacing:7px">국가별 상반기 매출 현황</div>
<div class="a" style="left:80px;top:464px;width:1193px;height:49px;background:#c4d79b"></div>
<div class="a" style="left:85px;top:478px;width:198px;display:flex;justify-content:space-between;font-weight:bold;font-size:17.5px;line-height:22px;color:#000"><span>항</span><span>목</span></div>
<div class="t" style="left:356.0px;top:478px;font-size:17.5px;color:#000;transform:translateX(-50%);font-weight:bold;line-height:22px;word-spacing:3px">1 월</div>
<div class="t" style="left:496.0px;top:478px;font-size:17.5px;color:#000;transform:translateX(-50%);font-weight:bold;line-height:22px">2월</div>
<div class="t" style="left:636.0px;top:478px;font-size:17.5px;color:#000;transform:translateX(-50%);font-weight:bold;line-height:22px">3월</div>
<div class="t" style="left:776.0px;top:478px;font-size:17.5px;color:#000;transform:translateX(-50%);font-weight:bold;line-height:22px">4월</div>
<div class="t" style="left:916.0px;top:478px;font-size:17.5px;color:#000;transform:translateX(-50%);font-weight:bold;line-height:22px">5월</div>
<div class="t" style="left:1056.0px;top:478px;font-size:17.5px;color:#000;transform:translateX(-50%);font-weight:bold;line-height:22px">6월</div>
<div class="t" style="left:1199.5px;top:478px;font-size:17.5px;color:#000;transform:translateX(-50%);font-weight:bold;line-height:22px">합&nbsp;&nbsp;&nbsp;&nbsp;&nbsp;계</div>
<div class="a" style="left:46px;top:369px;width:1528px;height:573px;overflow:hidden">
<div class="a" style="left:39px;top:150px;width:198px;display:flex;justify-content:space-between;font-size:18px;line-height:22px;color:#000;font-weight:350"><span>대</span><span>한</span><span>민</span><span>국</span></div>
<div class="t" style="left:370px;top:150.3px;transform:translateX(-100%);font-size:17.6px;line-height:22px;color:#000;letter-spacing:-0.15px">291,504,652</div>
<div class="t" style="left:510px;top:150.3px;transform:translateX(-100%);font-size:17.6px;line-height:22px;color:#000;letter-spacing:-0.15px">287,969,772</div>
<div class="t" style="left:650px;top:150.3px;transform:translateX(-100%);font-size:17.6px;line-height:22px;color:#000;letter-spacing:-0.15px">299,409,905</div>
<div class="t" style="left:790px;top:150.3px;transform:translateX(-100%);font-size:17.6px;line-height:22px;color:#000;letter-spacing:-0.15px">257,271,417</div>
<div class="t" style="left:930px;top:150.3px;transform:translateX(-100%);font-size:17.6px;line-height:22px;color:#000;letter-spacing:-0.15px">249,684,891</div>
<div class="t" style="left:1070px;top:150.3px;transform:translateX(-100%);font-size:17.6px;line-height:22px;color:#000;letter-spacing:-0.15px">248,065,099</div>
<div class="t" style="left:1217px;top:150.3px;transform:translateX(-100%);font-size:17.6px;line-height:22px;color:#000;letter-spacing:-0.15px">1,633,905,736</div>
<div class="a" style="left:35px;top:176px;width:1192px;height:0;border-top:1px dotted #222"></div>
<div class="a" style="left:39px;top:181px;width:198px;display:flex;justify-content:space-between;font-size:18px;line-height:22px;color:#000;font-weight:350"><span>일</span><span>본</span></div>
<div class="t" style="left:370px;top:181.3px;transform:translateX(-100%);font-size:17.6px;line-height:22px;color:#000;letter-spacing:-0.15px">3,660,641</div>
<div class="t" style="left:510px;top:181.3px;transform:translateX(-100%);font-size:17.6px;line-height:22px;color:#000;letter-spacing:-0.15px">2,852,414</div>
<div class="t" style="left:650px;top:181.3px;transform:translateX(-100%);font-size:17.6px;line-height:22px;color:#000;letter-spacing:-0.15px">3,616,774</div>
<div class="t" style="left:790px;top:181.3px;transform:translateX(-100%);font-size:17.6px;line-height:22px;color:#000;letter-spacing:-0.15px">3,659,592</div>
<div class="t" style="left:930px;top:181.3px;transform:translateX(-100%);font-size:17.6px;line-height:22px;color:#000;letter-spacing:-0.15px">3,794,583</div>
<div class="t" style="left:1070px;top:181.3px;transform:translateX(-100%);font-size:17.6px;line-height:22px;color:#000;letter-spacing:-0.15px">3,378,000</div>
<div class="t" style="left:1217px;top:181.3px;transform:translateX(-100%);font-size:17.6px;line-height:22px;color:#000;letter-spacing:-0.15px">20,962,004</div>
<div class="a" style="left:35px;top:207px;width:1192px;height:0;border-top:1px dotted #222"></div>
<div class="a" style="left:39px;top:213px;width:198px;display:flex;justify-content:space-between;font-size:18px;line-height:22px;color:#000;font-weight:350"><span>프</span><span>랑</span><span>스</span></div>
<div class="t" style="left:650px;top:213.3px;transform:translateX(-100%);font-size:17.6px;line-height:22px;color:#000;letter-spacing:-0.15px">600,000</div>
<div class="t" style="left:790px;top:213.3px;transform:translateX(-100%);font-size:17.6px;line-height:22px;color:#000;letter-spacing:-0.15px">300,000</div>
<div class="t" style="left:1217px;top:213.3px;transform:translateX(-100%);font-size:17.6px;line-height:22px;color:#000;letter-spacing:-0.15px">900,000</div>
<div class="a" style="left:35px;top:239px;width:1192px;height:0;border-top:1px dotted #222"></div>
<div class="a" style="left:39px;top:244px;width:198px;display:flex;justify-content:space-between;font-size:18px;line-height:22px;color:#000;font-weight:350"><span>독</span><span>일</span></div>
<div class="t" style="left:370px;top:244.3px;transform:translateX(-100%);font-size:17.6px;line-height:22px;color:#000;letter-spacing:-0.15px">78,289,101</div>
<div class="t" style="left:510px;top:244.3px;transform:translateX(-100%);font-size:17.6px;line-height:22px;color:#000;letter-spacing:-0.15px">78,623,445</div>
<div class="t" style="left:650px;top:244.3px;transform:translateX(-100%);font-size:17.6px;line-height:22px;color:#000;letter-spacing:-0.15px">89,697,522</div>
<div class="t" style="left:790px;top:244.3px;transform:translateX(-100%);font-size:17.6px;line-height:22px;color:#000;letter-spacing:-0.15px">102,952,631</div>
<div class="t" style="left:930px;top:244.3px;transform:translateX(-100%);font-size:17.6px;line-height:22px;color:#000;letter-spacing:-0.15px">71,148,870</div>
<div class="t" style="left:1070px;top:244.3px;transform:translateX(-100%);font-size:17.6px;line-height:22px;color:#000;letter-spacing:-0.15px">84,703,561</div>
<div class="t" style="left:1217px;top:244.3px;transform:translateX(-100%);font-size:17.6px;line-height:22px;color:#000;letter-spacing:-0.15px">505,415,130</div>
<div class="a" style="left:35px;top:270px;width:1192px;height:0;border-top:1px dotted #222"></div>
<div class="a" style="left:39px;top:276px;width:198px;display:flex;justify-content:space-between;font-size:18px;line-height:22px;color:#000;font-weight:350"><span>영</span><span>국</span></div>
<div class="t" style="left:370px;top:276.3px;transform:translateX(-100%);font-size:17.6px;line-height:22px;color:#000;letter-spacing:-0.15px">120,791,400</div>
<div class="t" style="left:510px;top:276.3px;transform:translateX(-100%);font-size:17.6px;line-height:22px;color:#000;letter-spacing:-0.15px">119,803,805</div>
<div class="t" style="left:650px;top:276.3px;transform:translateX(-100%);font-size:17.6px;line-height:22px;color:#000;letter-spacing:-0.15px">142,437,558</div>
<div class="t" style="left:790px;top:276.3px;transform:translateX(-100%);font-size:17.6px;line-height:22px;color:#000;letter-spacing:-0.15px">142,661,464</div>
<div class="t" style="left:930px;top:276.3px;transform:translateX(-100%);font-size:17.6px;line-height:22px;color:#000;letter-spacing:-0.15px">102,765,849</div>
<div class="t" style="left:1070px;top:276.3px;transform:translateX(-100%);font-size:17.6px;line-height:22px;color:#000;letter-spacing:-0.15px">109,268,882</div>
<div class="t" style="left:1217px;top:276.3px;transform:translateX(-100%);font-size:17.6px;line-height:22px;color:#000;letter-spacing:-0.15px">737,728,958</div>
<div class="a" style="left:35px;top:302px;width:1192px;height:0;border-top:1px dotted #222"></div>
<div class="a" style="left:39px;top:307px;width:198px;display:flex;justify-content:space-between;font-size:18px;line-height:22px;color:#000;font-weight:350"><span>말</span><span>레</span><span>이</span><span>시</span><span>아</span></div>
<div class="t" style="left:370px;top:307.3px;transform:translateX(-100%);font-size:17.6px;line-height:22px;color:#000;letter-spacing:-0.15px">261,909,585</div>
<div class="t" style="left:510px;top:307.3px;transform:translateX(-100%);font-size:17.6px;line-height:22px;color:#000;letter-spacing:-0.15px">244,385,433</div>
<div class="t" style="left:650px;top:307.3px;transform:translateX(-100%);font-size:17.6px;line-height:22px;color:#000;letter-spacing:-0.15px">205,291,856</div>
<div class="t" style="left:790px;top:307.3px;transform:translateX(-100%);font-size:17.6px;line-height:22px;color:#000;letter-spacing:-0.15px">151,195,871</div>
<div class="t" style="left:930px;top:307.3px;transform:translateX(-100%);font-size:17.6px;line-height:22px;color:#000;letter-spacing:-0.15px">148,982,309</div>
<div class="t" style="left:1070px;top:307.3px;transform:translateX(-100%);font-size:17.6px;line-height:22px;color:#000;letter-spacing:-0.15px">145,209,600</div>
<div class="t" style="left:1217px;top:307.3px;transform:translateX(-100%);font-size:17.6px;line-height:22px;color:#000;letter-spacing:-0.15px">1,156,974,654</div>
<div class="a" style="left:35px;top:333px;width:1192px;height:0;border-top:1px dotted #222"></div>
<div class="a" style="left:39px;top:339px;width:198px;display:flex;justify-content:space-between;font-size:18px;line-height:22px;color:#000;font-weight:350"><span>인</span><span>도</span><span>네</span><span>시</span><span>아</span></div>
<div class="t" style="left:370px;top:339.3px;transform:translateX(-100%);font-size:17.6px;line-height:22px;color:#000;letter-spacing:-0.15px">1,284,600</div>
<div class="t" style="left:510px;top:339.3px;transform:translateX(-100%);font-size:17.6px;line-height:22px;color:#000;letter-spacing:-0.15px">405,818</div>
<div class="t" style="left:650px;top:339.3px;transform:translateX(-100%);font-size:17.6px;line-height:22px;color:#000;letter-spacing:-0.15px">184,600</div>
<div class="t" style="left:790px;top:339.3px;transform:translateX(-100%);font-size:17.6px;line-height:22px;color:#000;letter-spacing:-0.15px">1,539,998</div>
<div class="t" style="left:930px;top:339.3px;transform:translateX(-100%);font-size:17.6px;line-height:22px;color:#000;letter-spacing:-0.15px">284,680</div>
<div class="t" style="left:1070px;top:339.3px;transform:translateX(-100%);font-size:17.6px;line-height:22px;color:#000;letter-spacing:-0.15px">1,048,680</div>
<div class="t" style="left:1217px;top:339.3px;transform:translateX(-100%);font-size:17.6px;line-height:22px;color:#000;letter-spacing:-0.15px">4,748,376</div>
<div class="a" style="left:35px;top:365px;width:1192px;height:0;border-top:1px dotted #222"></div>
<div class="a" style="left:39px;top:370px;width:198px;display:flex;justify-content:space-between;font-size:18px;line-height:22px;color:#000;font-weight:350"><span>스</span><span>리</span><span>랑</span><span>카</span></div>
<div class="t" style="left:510px;top:370.3px;transform:translateX(-100%);font-size:17.6px;line-height:22px;color:#000;letter-spacing:-0.15px">209,000</div>
<div class="t" style="left:1217px;top:370.3px;transform:translateX(-100%);font-size:17.6px;line-height:22px;color:#000;letter-spacing:-0.15px">209,000</div>
<div class="a" style="left:35px;top:396px;width:1192px;height:0;border-top:1px dotted #222"></div>
<div class="a" style="left:39px;top:401px;width:198px;display:flex;justify-content:space-between;font-size:18px;line-height:22px;color:#000;font-weight:350"><span>미</span><span>국</span></div>
<div class="t" style="left:370px;top:401.3px;transform:translateX(-100%);font-size:17.6px;line-height:22px;color:#000;letter-spacing:-0.15px">131,120,023</div>
<div class="t" style="left:510px;top:401.3px;transform:translateX(-100%);font-size:17.6px;line-height:22px;color:#000;letter-spacing:-0.15px">132,172,174</div>
<div class="t" style="left:650px;top:401.3px;transform:translateX(-100%);font-size:17.6px;line-height:22px;color:#000;letter-spacing:-0.15px">109,249,764</div>
<div class="t" style="left:790px;top:401.3px;transform:translateX(-100%);font-size:17.6px;line-height:22px;color:#000;letter-spacing:-0.15px">115,712,738</div>
<div class="t" style="left:930px;top:401.3px;transform:translateX(-100%);font-size:17.6px;line-height:22px;color:#000;letter-spacing:-0.15px">76,021,526</div>
<div class="t" style="left:1070px;top:401.3px;transform:translateX(-100%);font-size:17.6px;line-height:22px;color:#000;letter-spacing:-0.15px">79,699,212</div>
<div class="t" style="left:1217px;top:401.3px;transform:translateX(-100%);font-size:17.6px;line-height:22px;color:#000;letter-spacing:-0.15px">643,975,437</div>
<div class="a" style="left:35px;top:427px;width:1192px;height:0;border-top:1px dotted #222"></div>
<div class="a" style="left:39px;top:433px;width:198px;display:flex;justify-content:space-between;font-size:18px;line-height:22px;color:#000;font-weight:350"><span>이</span><span>탈</span><span>리</span><span>아</span></div>
<div class="t" style="left:1217px;top:433.3px;transform:translateX(-100%);font-size:17.6px;line-height:22px;color:#000;letter-spacing:-0.15px">0</div>
<div class="a" style="left:35px;top:459px;width:1192px;height:0;border-top:1px dotted #222"></div>
<div class="a" style="left:39px;top:464px;width:198px;display:flex;justify-content:space-between;font-size:18px;line-height:22px;color:#000;font-weight:350"><span>파</span><span>키</span><span>스</span><span>탄</span></div>
<div class="t" style="left:370px;top:464.3px;transform:translateX(-100%);font-size:17.6px;line-height:22px;color:#000;letter-spacing:-0.15px">304,259,938</div>
<div class="t" style="left:510px;top:464.3px;transform:translateX(-100%);font-size:17.6px;line-height:22px;color:#000;letter-spacing:-0.15px">257,222,747</div>
<div class="t" style="left:650px;top:464.3px;transform:translateX(-100%);font-size:17.6px;line-height:22px;color:#000;letter-spacing:-0.15px">311,256,560</div>
<div class="t" style="left:790px;top:464.3px;transform:translateX(-100%);font-size:17.6px;line-height:22px;color:#000;letter-spacing:-0.15px">263,665,550</div>
<div class="t" style="left:930px;top:464.3px;transform:translateX(-100%);font-size:17.6px;line-height:22px;color:#000;letter-spacing:-0.15px">215,246,219</div>
<div class="t" style="left:1070px;top:464.3px;transform:translateX(-100%);font-size:17.6px;line-height:22px;color:#000;letter-spacing:-0.15px">225,067,900</div>
<div class="t" style="left:1217px;top:464.3px;transform:translateX(-100%);font-size:17.6px;line-height:22px;color:#000;letter-spacing:-0.15px">1,576,718,914</div>
<div class="a" style="left:35px;top:490px;width:1192px;height:0;border-top:1px dotted #222"></div>
<div class="a" style="left:39px;top:496px;width:198px;display:flex;justify-content:space-between;font-size:18px;line-height:22px;color:#000;font-weight:350"><span>폴</span><span>란</span><span>드</span></div>
<div class="t" style="left:370px;top:496.3px;transform:translateX(-100%);font-size:17.6px;line-height:22px;color:#000;letter-spacing:-0.15px">157,542,000</div>
<div class="t" style="left:510px;top:496.3px;transform:translateX(-100%);font-size:17.6px;line-height:22px;color:#000;letter-spacing:-0.15px">132,595,000</div>
<div class="t" style="left:650px;top:496.3px;transform:translateX(-100%);font-size:17.6px;line-height:22px;color:#000;letter-spacing:-0.15px">156,973,500</div>
<div class="t" style="left:790px;top:496.3px;transform:translateX(-100%);font-size:17.6px;line-height:22px;color:#000;letter-spacing:-0.15px">136,825,629</div>
<div class="t" style="left:930px;top:496.3px;transform:translateX(-100%);font-size:17.6px;line-height:22px;color:#000;letter-spacing:-0.15px">105,901,000</div>
<div class="t" style="left:1070px;top:496.3px;transform:translateX(-100%);font-size:17.6px;line-height:22px;color:#000;letter-spacing:-0.15px">95,277,000</div>
<div class="t" style="left:1217px;top:496.3px;transform:translateX(-100%);font-size:17.6px;line-height:22px;color:#000;letter-spacing:-0.15px">785,114,129</div>
<div class="a" style="left:35px;top:522px;width:1192px;height:0;border-top:1px dotted #222"></div>
<div class="a" style="left:39px;top:527px;width:198px;display:flex;justify-content:space-between;font-size:18px;line-height:22px;color:#000;font-weight:350"><span>러</span><span>시</span><span>아</span></div>
<div class="t" style="left:370px;top:527.3px;transform:translateX(-100%);font-size:17.6px;line-height:22px;color:#000;letter-spacing:-0.15px">327,600</div>
<div class="t" style="left:510px;top:527.3px;transform:translateX(-100%);font-size:17.6px;line-height:22px;color:#000;letter-spacing:-0.15px">305,100</div>
<div class="t" style="left:650px;top:527.3px;transform:translateX(-100%);font-size:17.6px;line-height:22px;color:#000;letter-spacing:-0.15px">150,000</div>
<div class="t" style="left:790px;top:527.3px;transform:translateX(-100%);font-size:17.6px;line-height:22px;color:#000;letter-spacing:-0.15px">128,400</div>
<div class="t" style="left:930px;top:527.3px;transform:translateX(-100%);font-size:17.6px;line-height:22px;color:#000;letter-spacing:-0.15px">680,000</div>
<div class="t" style="left:1070px;top:527.3px;transform:translateX(-100%);font-size:17.6px;line-height:22px;color:#000;letter-spacing:-0.15px">292,000</div>
<div class="t" style="left:1217px;top:527.3px;transform:translateX(-100%);font-size:17.6px;line-height:22px;color:#000;letter-spacing:-0.15px">1,883,100</div>
<div class="a" style="left:35px;top:553px;width:1192px;height:0;border-top:1px dotted #222"></div>
<div class="a" style="left:39px;top:558px;width:198px;display:flex;justify-content:space-between;font-size:18px;line-height:22px;color:#000;font-weight:350"><span>싱</span><span>가</span><span>폴</span></div>
<div class="t" style="left:370px;top:558.3px;transform:translateX(-100%);font-size:17.6px;line-height:22px;color:#000;letter-spacing:-0.15px">1,243,000</div>
<div class="t" style="left:510px;top:558.3px;transform:translateX(-100%);font-size:17.6px;line-height:22px;color:#000;letter-spacing:-0.15px">261,000</div>
<div class="t" style="left:650px;top:558.3px;transform:translateX(-100%);font-size:17.6px;line-height:22px;color:#000;letter-spacing:-0.15px">17,000</div>
<div class="t" style="left:790px;top:558.3px;transform:translateX(-100%);font-size:17.6px;line-height:22px;color:#000;letter-spacing:-0.15px">140,000</div>
<div class="t" style="left:930px;top:558.3px;transform:translateX(-100%);font-size:17.6px;line-height:22px;color:#000;letter-spacing:-0.15px">78,000</div>
<div class="t" style="left:1217px;top:558.3px;transform:translateX(-100%);font-size:17.6px;line-height:22px;color:#000;letter-spacing:-0.15px">1,739,000</div>
<div class="a" style="left:35px;top:584px;width:1192px;height:0;border-top:1px dotted #222"></div>
</div>
<div class="a" style="left:80px;top:464px;width:1px;height:478px;background:#111"></div>
<div class="a" style="left:286px;top:464px;width:1px;height:478px;background:#111"></div>
<div class="a" style="left:426px;top:464px;width:1px;height:478px;background:#111"></div>
<div class="a" style="left:566px;top:464px;width:1px;height:478px;background:#111"></div>
<div class="a" style="left:706px;top:464px;width:1px;height:478px;background:#111"></div>
<div class="a" style="left:846px;top:464px;width:1px;height:478px;background:#111"></div>
<div class="a" style="left:986px;top:464px;width:1px;height:478px;background:#111"></div>
<div class="a" style="left:1126px;top:464px;width:1px;height:478px;background:#111"></div>
<div class="a" style="left:1272px;top:464px;width:2px;height:478px;background:#8a8d84"></div>
<div class="a" style="left:80px;top:464px;width:1193px;height:1px;background:#000"></div>
<div class="a" style="left:286px;top:513px;width:987px;height:1px;background:#000"></div>
<div class="a" style="left:81px;top:513px;width:205px;height:0;border-top:1px dotted #000"></div>
<div class="a" style="left:1300px;top:796px;width:100px;height:34px;border:2px solid #217346"></div>
<div class="a" style="left:1396px;top:826px;width:5px;height:5px;background:#217346;border:1px solid #fff"></div>
<svg style="left:1011px;top:753px;" width="12" height="12" viewBox="0 0 12 12"><path d="M4 0.500h4v3.500h3.500v4H8v3.500H4V8H0.500V4H4z" fill="#fff" stroke="#000" stroke-width="1"/></svg>
<div class="a" style="left:1574px;top:341px;width:21px;height:601px;background:#e6e6e6"></div>
<div class="a" style="left:1577px;top:359px;width:16px;height:569px;background:#dddbdd"></div>
<div class="a" style="left:1577px;top:342px;width:16px;height:16px;background:#fff;border:1px solid #d4d4d4"></div>
<svg style="left:1581px;top:347px;" width="8" height="6" viewBox="0 0 8 6"><path d="M4 0.500L7.500 5H0.500z" fill="#777"/></svg>
<div class="a" style="left:1577px;top:358px;width:16px;height:301px;background:#fff;border:1px solid #c6c6c6"></div>
<div class="a" style="left:1577px;top:928px;width:16px;height:14px;background:#fff;border:1px solid #d4d4d4"></div>
<svg style="left:1581px;top:933px;" width="8" height="6" viewBox="0 0 8 6"><path d="M4 5.500L7.500 1H0.500z" fill="#6a6a6a"/></svg>
<div class="a" style="left:4px;top:942px;width:1591px;height:24px;background:#e6e6e6"></div>
<div class="a" style="left:4px;top:966px;width:1591px;height:3px;background:#f6f6f6"></div>
<svg style="left:25px;top:949px;" width="7" height="10" viewBox="0 0 7 10"><path d="M6 0.500v9L0.500 5z" fill="#c8c8c8"/></svg>
<svg style="left:49px;top:949px;" width="7" height="10" viewBox="0 0 7 10"><path d="M0.500 0.500v9L6 5z" fill="#217346"/></svg>
<div class="a" style="left:89px;top:942px;width:178px;height:21px;background:#fff"></div>
<div class="a" style="left:89px;top:962px;width:178px;height:2px;background:#217346"></div>
<div class="a" style="left:88px;top:943px;width:1px;height:20px;background:#c6c6c6"></div>
<div class="a" style="left:267px;top:943px;width:1px;height:20px;background:#c6c6c6"></div>
<div class="a" style="left:1282px;top:967px;width:42px;height:2px;background:#c9c9c9"></div>
<div class="t" style="left:178px;top:943px;font-size:15px;color:#217346;transform:translateX(-50%);line-height:19px;letter-spacing:0.35px">결측치 처리-국가별 매출</div>
<div class="t" style="left:345px;top:943px;font-size:15px;color:#555;transform:translateX(-50%);line-height:19px;letter-spacing:0.35px">결측치 처리-사원명부</div>
<div class="t" style="left:523.5px;top:943px;font-size:15px;color:#555;transform:translateX(-50%);line-height:19px;letter-spacing:0.35px">데이터 클린징-국가별주문량</div>
<div class="t" style="left:675px;top:943px;font-size:15px;color:#555;transform:translateX(-50%);line-height:19px;letter-spacing:0.35px">금액단위변경</div>
<div class="t" style="left:839.5px;top:943px;font-size:15px;color:#555;transform:translateX(-50%);line-height:19px;letter-spacing:0.35px">텍스트나누기 및 개체 삭제 사례</div>
<div class="t" style="left:1029px;top:943px;font-size:15px;color:#555;transform:translateX(-50%);line-height:19px;letter-spacing:0.35px">데이터타입 오류 사례</div>
<div class="t" style="left:1177.5px;top:943px;font-size:15px;color:#555;transform:translateX(-50%);line-height:19px;letter-spacing:0.35px">데이터타입 오류02</div>
<div class="t" style="left:1318.5px;top:943px;font-size:15px;color:#555;transform:translateX(-50%);line-height:19px;letter-spacing:0.35px">데이터타입 오류 ...</div>
<div class="a" style="left:423px;top:946px;width:1px;height:15px;background:#ababab"></div>
<div class="a" style="left:622px;top:946px;width:1px;height:15px;background:#ababab"></div>
<div class="a" style="left:727px;top:946px;width:1px;height:15px;background:#ababab"></div>
<div class="a" style="left:951px;top:946px;width:1px;height:15px;background:#ababab"></div>
<div class="a" style="left:1107px;top:946px;width:1px;height:15px;background:#ababab"></div>
<div class="a" style="left:1247px;top:946px;width:1px;height:15px;background:#ababab"></div>
<svg style="left:1388px;top:946px;" width="16" height="16" viewBox="0 0 16 16"><circle cx="8" cy="8" r="7" fill="none" stroke="#777" stroke-width="1"/><path d="M8 4.500v7M4.500 8h7" stroke="#777" stroke-width="1.200"/></svg>
<div class="a" style="left:1419px;top:950px;width:3px;height:3px;background:#b9b9b9"></div>
<div class="a" style="left:1419px;top:954px;width:3px;height:3px;background:#b9b9b9"></div>
<div class="a" style="left:1419px;top:958px;width:3px;height:3px;background:#b9b9b9"></div>
<div class="a" style="left:1434px;top:947px;width:140px;height:15px;background:#dddbdd"></div>
<div class="a" style="left:1434px;top:947px;width:16px;height:15px;background:#fff;border:1px solid #d4d4d4"></div>
<svg style="left:1439px;top:951px;" width="6" height="8" viewBox="0 0 6 8"><path d="M5.500 0.500v7L0.500 4z" fill="#6a6a6a"/></svg>
<div class="a" style="left:1450px;top:947px;width:94px;height:15px;background:#fff;border:1px solid #c2c2c2"></div>
<div class="a" style="left:1558px;top:947px;width:16px;height:15px;background:#fff;border:1px solid #d4d4d4"></div>
<svg style="left:1564px;top:951px;" width="6" height="8" viewBox="0 0 6 8"><path d="M0.500 0.500v7L5.500 4z" fill="#6a6a6a"/></svg>
<div class="a" style="left:4px;top:942px;width:1570px;height:1px;background:#c4c4c4"></div>
<div class="a" style="left:1573px;top:369px;width:1px;height:574px;background:#b5b5b5"></div>
<div class="a" style="left:1598px;top:0px;width:320px;height:1017px;background:#fff"></div>
<div class="a" style="left:1598px;top:0px;width:2px;height:1017px;background:#141414"></div>
<svg style="left:1620px;top:15.0px;" width="8" height="5" viewBox="0 0 8 5"><path d="M0.500 0.500L4 4l3.500-3.500" stroke="#555" stroke-width="1.4" fill="none"/></svg>
<div class="t" style="left:1760px;top:8px;font-size:13.5px;color:#232333;transform:translateX(-50%);font-weight:bold;line-height:17px">참가자(53)</div>
<div class="a" style="left:1623px;top:45px;width:275px;height:25px;background:#f2f2f7;border-radius:7px"></div>
<div class="a" style="left:1624px;top:46px;width:136px;height:23px;background:#fff;border-radius:6px;box-shadow:0 1px 2px rgba(0,0,0,0.15)"></div>
<div class="t" style="left:1692px;top:50.5px;font-size:12px;color:#0e72ed;transform:translateX(-50%);font-weight:bold;line-height:15px">토론자(6)</div>
<div class="t" style="left:1828.5px;top:50.5px;font-size:12px;color:#55556a;transform:translateX(-50%);font-weight:bold;line-height:15px">참석자(47)</div>
<div class="a" style="left:1619px;top:89px;width:25px;height:25px;background:#1b9e7c;border-radius:6px"></div>
<div class="t" style="left:1631.5px;top:94px;font-size:12.5px;color:#fff;transform:translateX(-50%);font-weight:bold;line-height:15px">마</div>
<div class="t" style="left:1657px;top:93px;font-size:13.5px;color:#232333;line-height:17px">마소캠퍼스TA (나)</div>
<svg style="left:1856px;top:94px;" width="16" height="16" viewBox="0 0 16 16"><path d="M8 1.500c1.400 0 2.400 1 2.400 2.400v4c0 1.400-1 2.400-2.400 2.400S5.600 9.300 5.600 7.900v-4c0-1.400 1-2.400 2.400-2.400z" fill="none" stroke="#e02828" stroke-width="1"/><path d="M3.600 7.500c0 2.600 2 4.500 4.400 4.500s4.400-1.900 4.400-4.500M8 12v2.200M5.800 14.500h4.400" stroke="#e02828" stroke-width="1" fill="none"/><path d="M1 15.500L15.500 0.500" stroke="#e02828" stroke-width="1.100"/></svg>
<svg style="left:1879px;top:94px;" width="16" height="16" viewBox="0 0 16 16"><path d="M1.500 4.500h9.500a1 1 0 0 1 1 1v6a1 1 0 0 1-1 1H3.500l-2-1.500z" fill="none" stroke="#e02828" stroke-width="1.100"/><path d="M12 7.500l4-2.500v7.500l-4-2.500" fill="none" stroke="#e02828" stroke-width="1.100"/><path d="M1 15.500L15.500 0.500" stroke="#e02828" stroke-width="1.100"/></svg>
<svg style="left:1619px;top:130px;" width="26" height="26" viewBox="0 0 26 26"><defs><clipPath id="avc"><rect x="0" y="0" width="26" height="26" rx="7"/></clipPath><linearGradient id="avg" x1="0" y1="0.300" x2="0.800" y2="1"><stop offset="0" stop-color="#bcd6f0"/><stop offset="0.600" stop-color="#9cc3ea"/><stop offset="1" stop-color="#d9e8f6"/></linearGradient></defs><g clip-path="url(#avc)"><rect width="26" height="26" fill="#fff"/><path d="M0 15 H26 V26 H0z" fill="#eef4fb"/><path d="M0 14 C8 16 14 21 19 26 L0 26z" fill="url(#avg)"/><path d="M0 19 C5 20 9 23 12 26" stroke="#6fa8dc" stroke-width="1.200" fill="none"/></g></svg>
<div class="t" style="left:1619.3px;top:141.8px;font-size:4.2px;color:#c4161c;font-weight:bold;line-height:5px">MASO</div>
<div class="t" style="left:1633px;top:143.7px;font-size:2.6px;color:#333;font-weight:bold;line-height:3px">CAMPUS</div>
<div class="t" style="left:1657px;top:135px;font-size:13.5px;color:#232333;line-height:17px;letter-spacing:0.1px">Masocampus MM (호스트)</div>
<svg style="left:1832px;top:138px;" width="16" height="11" viewBox="0 0 16 11"><path d="M4 10.500a3.300 3.300 0 0 1-.5-6.500 4.300 4.300 0 0 1 8.300-.5 3.500 3.500 0 0 1 .5 7z" fill="none" stroke="#666" stroke-width="1"/><circle cx="8" cy="6.500" r="1.400" fill="#e02828"/></svg>
<svg style="left:1856px;top:135.5px;" width="16" height="16" viewBox="0 0 16 16"><path d="M8 1.500c1.400 0 2.400 1 2.400 2.400v4c0 1.400-1 2.400-2.400 2.400S5.600 9.300 5.600 7.900v-4c0-1.400 1-2.400 2.400-2.400z" fill="none" stroke="#e02828" stroke-width="1"/><path d="M3.600 7.500c0 2.600 2 4.500 4.400 4.500s4.400-1.900 4.400-4.500M8 12v2.200M5.800 14.500h4.400" stroke="#e02828" stroke-width="1" fill="none"/><path d="M1 15.500L15.500 0.500" stroke="#e02828" stroke-width="1.100"/></svg>
<svg style="left:1879px;top:135.5px;" width="16" height="16" viewBox="0 0 16 16"><path d="M1.500 4.500h9.500a1 1 0 0 1 1 1v6a1 1 0 0 1-1 1H3.500l-2-1.500z" fill="none" stroke="#e02828" stroke-width="1.100"/><path d="M12 7.500l4-2.500v7.500l-4-2.500" fill="none" stroke="#e02828" stroke-width="1.100"/><path d="M1 15.500L15.500 0.500" stroke="#e02828" stroke-width="1.100"/></svg>
<div class="a" style="left:1619px;top:171px;width:25px;height:25px;background:#33475f;border-radius:6px"></div>
<div class="t" style="left:1631.5px;top:176px;font-size:12.5px;color:#fff;transform:translateX(-50%);font-weight:bold;line-height:15px">김</div>
<div class="a" style="left:1832px;top:178px;width:16px;height:12px;background:#0ea42b;border-radius:2px"></div>
<svg style="left:1837px;top:181px;" width="6" height="6" viewBox="0 0 6 6"><path d="M3 5.500V1M1 2.800L3 0.800l2 2" stroke="#fff" stroke-width="1.200" fill="none"/></svg>
<svg style="left:1858px;top:176px;" width="12" height="16" viewBox="0 0 12 16"><rect x="3.500" y="0.500" width="5" height="9.500" rx="2.500" fill="#8a8a8a"/><path d="M1.500 7c0 2.800 2 4.500 4.500 4.500s4.500-1.700 4.500-4.500M6 11.500v2.500M3.500 14.500h5" stroke="#8a8a8a" stroke-width="1" fill="none"/></svg>
<svg style="left:1879px;top:176px;" width="16" height="16" viewBox="0 0 16 16"><path d="M1.500 4.500h9.500a1 1 0 0 1 1 1v6a1 1 0 0 1-1 1H3.500l-2-1.500z" fill="none" stroke="#e02828" stroke-width="1.100"/><path d="M12 7.500l4-2.500v7.500l-4-2.500" fill="none" stroke="#e02828" stroke-width="1.100"/><path d="M1 15.500L15.500 0.500" stroke="#e02828" stroke-width="1.100"/></svg>
<div class="a" style="left:1619px;top:212px;width:25px;height:22px;background:#d35400;border-radius:6px 6px 0 0"></div>
<div class="t" style="left:1631.5px;top:217px;font-size:13px;color:#fff;transform:translateX(-50%);font-weight:bold;line-height:15px">M</div>
<div class="t" style="left:1657px;top:217px;font-size:13.5px;color:#232333;line-height:17px">masocampusTA</div>
<div class="a" style="left:1856px;top:217px;width:44px;height:17px;overflow:hidden">
<svg style="left:0px;top:0px;" width="16" height="16" viewBox="0 0 16 16"><path d="M8 1.500c1.400 0 2.400 1 2.400 2.400v4c0 1.400-1 2.400-2.400 2.400S5.600 9.300 5.600 7.900v-4c0-1.400 1-2.400 2.400-2.400z" fill="none" stroke="#e02828" stroke-width="1"/><path d="M3.600 7.500c0 2.600 2 4.500 4.400 4.500s4.400-1.900 4.400-4.500M8 12v2.200M5.800 14.500h4.400" stroke="#e02828" stroke-width="1" fill="none"/><path d="M1 15.500L15.500 0.500" stroke="#e02828" stroke-width="1.100"/></svg>
<svg style="left:23px;top:0px;" width="16" height="16" viewBox="0 0 16 16"><path d="M1.500 4.500h9.500a1 1 0 0 1 1 1v6a1 1 0 0 1-1 1H3.500l-2-1.500z" fill="none" stroke="#e02828" stroke-width="1.100"/><path d="M12 7.500l4-2.500v7.500l-4-2.500" fill="none" stroke="#e02828" stroke-width="1.100"/><path d="M1 15.500L15.500 0.500" stroke="#e02828" stroke-width="1.100"/></svg>
</div>
<div class="a" style="left:1910px;top:82px;width:8px;height:152px;background:#f4f4f8;border-radius:4px"></div>
<div class="a" style="left:1910px;top:82px;width:7px;height:75px;background:#a8a8b3;border-radius:4px"></div>
<div class="a" style="left:1632px;top:252px;width:39px;height:23px;background:#f2f2f7;border-radius:6px"></div>
<div class="t" style="left:1651.5px;top:255px;font-size:12.5px;color:#232333;transform:translateX(-50%);line-height:16px;letter-spacing:0.3px">초대</div>
<div class="a" style="left:1702px;top:252px;width:105px;height:23px;background:#f2f2f7;border-radius:6px"></div>
<div class="t" style="left:1754.5px;top:255px;font-size:12.5px;color:#232333;transform:translateX(-50%);line-height:16px;letter-spacing:0.3px">나만 음소거 해제</div>
<div class="a" style="left:1838px;top:252px;width:51px;height:23px;background:#f2f2f7;border-radius:6px"></div>
<div class="t" style="left:1863.5px;top:255px;font-size:12.5px;color:#232333;transform:translateX(-50%);line-height:16px;letter-spacing:0.3px">손들기</div>
<div class="a" style="left:1621px;top:289px;width:297px;height:1px;background:#ececf0"></div>
<svg style="left:1620px;top:309.5px;" width="8" height="5" viewBox="0 0 8 5"><path d="M0.500 0.500L4 4l3.500-3.500" stroke="#555" stroke-width="1.4" fill="none"/></svg>
<div class="t" style="left:1760px;top:302px;font-size:13.5px;color:#232333;transform:translateX(-50%);font-weight:bold;line-height:17px;letter-spacing:0.2px">Zoom 웨비나 채팅</div>
<div class="t" style="left:1619.5px;top:341px;font-size:15px;color:#232333;line-height:20px"><span style="font-size:13.2px;letter-spacing:-0.3px">3</span>일요<span style="font-size:13.2px;letter-spacing:-0.3px">!!!</span></div>
<div class="t" style="left:1619.5px;top:376.5px;font-size:12.8px;color:#6e6e82;line-height:16px">발신자</div>
<div class="t" style="left:1692.5px;top:376.5px;font-size:12.8px;color:#6e6e82;line-height:16px">수신자</div>
<div class="t" style="left:1726.8px;top:376.5px;font-size:12.8px;color:#0e72ed;line-height:16px">모든<span style="font-size:11.5px;letter-spacing:-0.3px"> </span>토론자<span style="font-size:11.5px;letter-spacing:-0.3px">:</span></div>
<div class="t" style="left:1619.5px;top:395.5px;font-size:15px;color:#232333;line-height:20px">일</div>
<div class="t" style="left:1619.5px;top:420.5px;font-size:15px;color:#232333;line-height:20px"><span style="font-size:13.2px;letter-spacing:-0.3px">2</span>일</div>
<div class="t" style="left:1619.5px;top:456.5px;font-size:12.8px;color:#6e6e82;line-height:16px">발신자</div>
<div class="t" style="left:1691.5px;top:456.5px;font-size:12.8px;color:#6e6e82;line-height:16px">수신자</div>
<div class="t" style="left:1725.8px;top:456.5px;font-size:12.8px;color:#0e72ed;line-height:16px">모든<span style="font-size:11.5px;letter-spacing:-0.3px"> </span>토론자<span style="font-size:11.5px;letter-spacing:-0.3px"> </span>및<span style="font-size:11.5px;letter-spacing:-0.3px"> </span>참석자<span style="font-size:11.5px;letter-spacing:-0.3px">:</span></div>
<div class="t" style="left:1619.5px;top:475.5px;font-size:15px;color:#232333;line-height:20px"><span style="font-size:13.2px;letter-spacing:-0.3px">5</span>일</div>
<div class="t" style="left:1619.5px;top:511px;font-size:12.8px;color:#6e6e82;line-height:16px">나로부터<span style="font-size:11.5px;letter-spacing:-0.3px"> </span>에게</div>
<div class="t" style="left:1697.5px;top:511px;font-size:12.8px;color:#0e72ed;line-height:16px">모든<span style="font-size:11.5px;letter-spacing:-0.3px"> </span>토론자<span style="font-size:11.5px;letter-spacing:-0.3px"> </span>및<span style="font-size:11.5px;letter-spacing:-0.3px"> </span>참석자<span style="font-size:11.5px;letter-spacing:-0.3px">:</span></div>
<div class="t" style="left:1619.5px;top:531px;font-size:15px;color:#232333;line-height:20px">실습자료파일<span style="font-size:13.2px;letter-spacing:-0.3px"> - 03 </span>실습자료<span style="font-size:13.2px;letter-spacing:-0.3px">A - </span>실습<span style="font-size:13.2px;letter-spacing:-0.3px">04</span>폴</div>
<div class="t" style="left:1619.5px;top:555.5px;font-size:15px;color:#232333;line-height:20px">더<span style="font-size:13.2px;letter-spacing:-0.3px"> - 01 </span>데이터<span style="font-size:13.2px;letter-spacing:-0.3px"> </span>편집과<span style="font-size:13.2px;letter-spacing:-0.3px"> </span>변환<span style="font-size:13.2px;letter-spacing:-0.3px"> </span>파일을<span style="font-size:13.2px;letter-spacing:-0.3px"> </span>열어주</div>
<div class="t" style="left:1619.5px;top:580.5px;font-size:15px;color:#232333;line-height:20px">세요</div>
<div class="t" style="left:1619.5px;top:605.5px;font-size:15px;color:#232333;line-height:20px">첫번째<span style="font-size:13.2px;letter-spacing:-0.3px"> </span>시트를<span style="font-size:13.2px;letter-spacing:-0.3px"> </span>열어주세요</div>
<div class="a" style="left:1910px;top:335px;width:8px;height:306px;background:#f4f4f8;border-radius:4px"></div>
<div class="a" style="left:1910px;top:620px;width:7px;height:21px;background:#a8a8b3;border-radius:4px"></div>
<div class="a" style="left:1600px;top:643px;width:310px;height:1px;background:#e6e6ee"></div>
<div class="t" style="left:1617.5px;top:659px;font-size:12.5px;color:#232333;line-height:16px">받는 사람:</div>
<div class="a" style="left:1680px;top:656px;width:135px;height:23px;background:#f2f2f7;border-radius:6px"></div>
<div class="t" style="left:1687px;top:659.5px;font-size:12px;color:#232333;line-height:16px;font-weight:500;letter-spacing:-0.15px">모든 토론자 및 참석자</div>
<svg style="left:1799px;top:665.0px;" width="8" height="5" viewBox="0 0 8 5"><path d="M0.500 0.500L4 4l3.500-3.500" stroke="#222" stroke-width="1.8" fill="none"/></svg>
<div class="a" style="left:1881px;top:655px;width:24px;height:24px;background:#fff;border:1px solid #dcdce6;border-radius:6px"></div>
<div class="a" style="left:1888px;top:666px;width:2px;height:2px;background:#666;border-radius:1px"></div>
<div class="a" style="left:1892px;top:666px;width:2px;height:2px;background:#666;border-radius:1px"></div>
<div class="a" style="left:1896px;top:666px;width:2px;height:2px;background:#666;border-radius:1px"></div>
<div class="a" style="left:1617px;top:685px;width:1px;height:17px;background:#222"></div>
<div class="t" style="left:1618.5px;top:685px;font-size:13px;color:#9a9aa8;line-height:17px;letter-spacing:0.45px">여기에 메시지 입력...</div>
<div class="a" style="left:0px;top:969px;width:1598px;height:48px;background:#1a1a1a"></div>
<svg style="left:38px;top:974px;" width="17" height="24" viewBox="0 0 17 24"><rect x="4.500" y="1" width="8" height="14" rx="4" fill="#a6a6a6"/><path d="M1.500 10.500c0 4.200 3 7 7 7s7-2.800 7-7M8.500 17.500v4M4.500 22h8" stroke="#a6a6a6" stroke-width="1.600" fill="none"/></svg>
<svg style="left:34px;top:974px;" width="24" height="24" viewBox="0 0 24 24"><path d="M0.500 23.500L23 0.500" stroke="#e8484f" stroke-width="1.900"/></svg>
<svg style="left:74px;top:983px;" width="8" height="5" viewBox="0 0 8 5"><path d="M0.500 4.500L4 1l3.500 3.500" stroke="#bdbdbd" stroke-width="1.300" fill="none"/></svg>
<div class="t" style="left:45.5px;top:1001.5px;font-size:12.5px;color:#c9c9c9;transform:translateX(-50%);line-height:16px;letter-spacing:0.35px">음소거 해제</div>
<svg style="left:127px;top:979px;" width="25" height="14" viewBox="0 0 25 14"><rect x="0" y="0.500" width="17" height="13" rx="2.500" fill="#a6a6a6"/><path d="M17.500 5l6-3.500v11l-6-3.500z" fill="#a6a6a6"/></svg>
<svg style="left:126px;top:974px;" width="25" height="24" viewBox="0 0 25 24"><path d="M0.500 23.500L24.500 0.500" stroke="#e8484f" stroke-width="1.900"/></svg>
<svg style="left:172px;top:983px;" width="8" height="5" viewBox="0 0 8 5"><path d="M0.500 4.500L4 1l3.500 3.500" stroke="#bdbdbd" stroke-width="1.300" fill="none"/></svg>
<div class="t" style="left:138.5px;top:1001.5px;font-size:12.5px;color:#c9c9c9;transform:translateX(-50%);line-height:16px;letter-spacing:0.35px">비디오 시작</div>
<svg style="left:662px;top:977px;" width="26" height="19" viewBox="0 0 26 19"><circle cx="9" cy="5" r="4.200" fill="#b9b9b9"/><path d="M0.500 18.500c0-5.500 3.500-8 8.500-8s8.500 2.500 8.500 8z" fill="#b9b9b9"/><circle cx="19" cy="6.500" r="3.300" fill="#b9b9b9"/><path d="M17.500 11.300c4.500-.5 7.500 2 7.500 7.200h-6c0-3-.5-5.500-1.500-7.200z" fill="#b9b9b9"/></svg>
<div class="t" style="left:689.5px;top:977px;font-size:11.5px;color:#d0d0d0;line-height:14px">53</div>
<div class="t" style="left:675px;top:1001.5px;font-size:12.5px;color:#c9c9c9;transform:translateX(-50%);line-height:16px;letter-spacing:0.35px">참가자</div>
<svg style="left:747px;top:977px;" width="26" height="19" viewBox="0 0 26 19"><path d="M8.500 0.500h14a2.500 2.500 0 0 1 2.500 2.500v6a2.500 2.500 0 0 1-2.500 2.500h-1v3l-3-3H17" fill="#b9b9b9"/><path d="M3 4.500h11.500a2.500 2.500 0 0 1 2.500 2.500v5.500a2.500 2.500 0 0 1-2.500 2.500H8l-3.500 3.500V15H3a2.500 2.500 0 0 1-2.500-2.500V7A2.500 2.500 0 0 1 3 4.500z" fill="#b9b9b9" stroke="#1a1a1a" stroke-width="1"/></svg>
<div class="t" style="left:760px;top:1001.5px;font-size:12.5px;color:#c9c9c9;transform:translateX(-50%);line-height:16px;letter-spacing:0.35px">Q&amp;A</div>
<svg style="left:829px;top:977px;" width="22" height="19" viewBox="0 0 22 19"><path d="M3.500 0.500h14.500a3 3 0 0 1 3 3v7a3 3 0 0 1-3 3H10l-5 4.500V13.500H3.500a3 3 0 0 1-3-3v-7a3 3 0 0 1 3-3z" fill="#b9b9b9"/></svg>
<div class="t" style="left:839.5px;top:1001.5px;font-size:12.5px;color:#c9c9c9;transform:translateX(-50%);line-height:16px;letter-spacing:0.35px">채팅</div>
<div class="a" style="left:916px;top:977px;width:25px;height:18px;background:#23d959;border-radius:3px"></div>
<svg style="left:924px;top:980px;" width="9" height="12" viewBox="0 0 9 12"><path d="M4.500 11V2M1 5.300L4.500 1.800 8 5.300" stroke="#1a1a1a" stroke-width="1.800" fill="none"/></svg>
<div class="t" style="left:928px;top:1001.5px;font-size:12.5px;color:#23d959;transform:translateX(-50%);line-height:16px;letter-spacing:0.35px">화면 공유</div>
<svg style="left:1007px;top:976px;" width="21" height="21" viewBox="0 0 21 21"><circle cx="10.500" cy="10.500" r="9.500" fill="none" stroke="#b9b9b9" stroke-width="1.400"/><circle cx="10.500" cy="10.500" r="7" fill="#a9a9a9"/></svg>
<div class="t" style="left:1018px;top:1001.5px;font-size:12.5px;color:#c9c9c9;transform:translateX(-50%);line-height:16px;letter-spacing:0.35px">기록</div>
<div class="a" style="left:1527px;top:983px;width:62px;height:26px;background:#c8202b;border-radius:7px"></div>
<div class="t" style="left:1558px;top:988px;font-size:12.5px;color:#fff;transform:translateX(-50%);font-weight:bold;line-height:16px">나가기</div>
</body></html>
